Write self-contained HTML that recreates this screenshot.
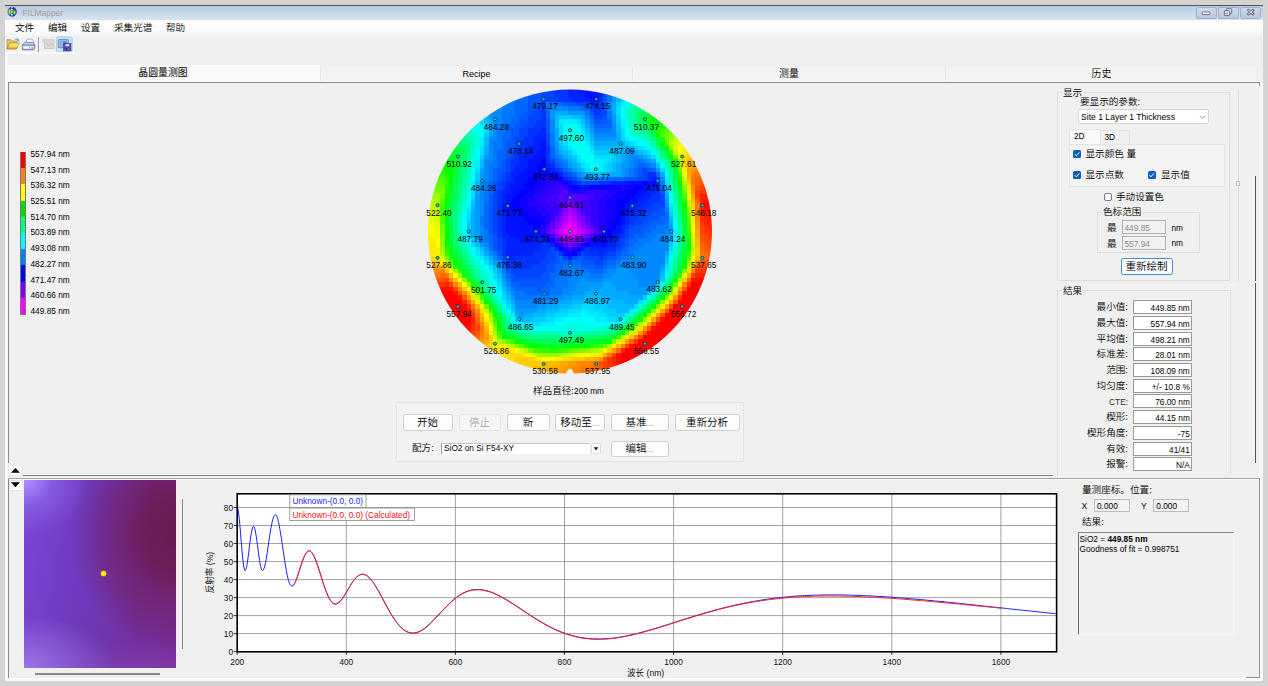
<!DOCTYPE html>
<html lang="zh"><head><meta charset="utf-8"><title>FILMapper</title>
<style>
*{box-sizing:border-box;margin:0;padding:0}
html,body{width:1268px;height:686px;overflow:hidden;background:#d3d3d3}
body{position:relative;font-family:"Liberation Sans","Noto Sans CJK SC",sans-serif;font-size:8.3px;color:#000;line-height:1}
.abs{position:absolute}
.win{left:5px;top:5px;width:1258px;height:676px;background:#f0f0f0;border-top:1px solid #555;}
.title{left:5px;top:6px;width:1258px;height:14px;background:linear-gradient(#b9cbe0,#c6d5e7 45%,#d8e3f0)}
.title span{position:absolute;left:17.5px;top:3.2px;font-size:8.4px;color:#a0a0a0}
.menu{left:5px;top:20px;width:1258px;height:16px;background:linear-gradient(#fcfcfc,#fafafa 70%,#f3f3f3)}
.menu span{position:absolute;top:2.5px;font-size:9.6px;white-space:nowrap;font-weight:350}
.wb{top:6.5px;height:12px;border:1px solid #9fb1c9;border-radius:2px;background:linear-gradient(#ccd9e9,#b7c8de)}
.tool{left:5px;top:36px;width:69px;height:18px;background:#f1f1f1}
.tab{top:67px;height:14px;font-size:9.9px;font-weight:350;text-align:center;padding-top:2.2px;border-right:1px solid #e6e6e6;background:#f3f3f3}
.tab.sel{font-weight:400;background:#fafafa;top:65.4px;height:15.6px;padding-top:3px}
.t{position:absolute;white-space:nowrap}
.cj{font-size:9.6px;font-weight:350}
.btn{position:absolute;background:#fdfdfd;border:1px solid #d0d0d0;border-radius:2.5px;text-align:center;font-size:10.5px;font-weight:350;white-space:nowrap}
.box{position:absolute;background:#fff;border:1px solid #999;text-align:right;padding:2.7px 1px 0 0;white-space:nowrap}
.gb{position:absolute;border:1px solid #dcdcdc}
.cb{position:absolute;width:8px;height:8px;border-radius:1.5px}
.cb.on{background:#0a5fc0}
.cb.off{background:#fdfdfd;border:1px solid #7a7a7a;border-radius:2px}
</style></head><body>
<div class="abs win"></div>
<div class="abs title"><span>FILMapper</span></div>
<!-- app icon -->
<svg class="abs" style="left:7px;top:6px" width="11" height="12" viewBox="0 0 11 12"><defs><radialGradient id="ig" cx=".25" cy=".5" r=".5"><stop offset="0" stop-color="#ff3010"/><stop offset=".45" stop-color="#ffe020"/><stop offset="1" stop-color="#20c830"/></radialGradient><clipPath id="ic"><ellipse cx="5.2" cy="5.8" rx="4.3" ry="4.7"/></clipPath></defs>
<g clip-path="url(#ic)"><rect x="0" y="0" width="11" height="12" fill="#1428d8"/><ellipse cx="2.6" cy="5.8" rx="2.1" ry="3" fill="url(#ig)"/><ellipse cx="7.3" cy="6.2" rx="1.5" ry="2.6" fill="#28c030"/><ellipse cx="7.6" cy="6.4" rx=".7" ry="1.3" fill="#d8e020"/><rect x="4.1" y="0" width="1.9" height="12" fill="#f4f4f4"/><path d="M5.2 2 v8" stroke="#111" stroke-width="1.1" stroke-dasharray="1 .7"/></g>
<ellipse cx="5.2" cy="5.8" rx="4.3" ry="4.7" fill="none" stroke="#2a3aa0" stroke-width=".5"/></svg>
<!-- window buttons -->
<div class="abs wb" style="left:1196px;width:20.5px"></div>
<div class="abs wb" style="left:1218px;width:20.5px"></div>
<div class="abs wb" style="left:1240px;width:21px"></div>
<svg class="abs" style="left:1196px;top:6px" width="66" height="13" viewBox="0 0 66 13"><rect x="6.3" y="6" width="7.6" height="2.6" rx=".6" fill="#f1f4f9" stroke="#59626f" stroke-width=".8"/><rect x="30.4" y="2.7" width="5.3" height="4.9" rx=".6" fill="#e9eef6" stroke="#59626f" stroke-width=".9"/><rect x="28.4" y="4.7" width="5.3" height="4.9" rx=".6" fill="#e9eef6" stroke="#59626f" stroke-width=".9"/><rect x="29.6" y="6.6" width="2.4" height="1.8" fill="#8e99aa"/><path d="M52.5 4.2 L57 8 M57 4.2 L52.5 8" stroke="#59626f" stroke-width="2.5" stroke-linecap="square"/><path d="M52.5 4.2 L57 8 M57 4.2 L52.5 8" stroke="#f1f4f9" stroke-width="1" stroke-linecap="square"/></svg>

<div class="abs menu"><span style="left:10px">文件</span><span style="left:43px">编辑</span><span style="left:76px">设置</span><span style="left:109px">采集光谱</span><span style="left:161px">帮助</span></div>
<div class="abs tool"></div>
<!-- toolbar icons -->
<svg class="abs" style="left:5px;top:36px" width="72" height="18" viewBox="0 0 72 18">
<defs><linearGradient id="fg" x1="0" y1="0" x2="0" y2="1"><stop offset="0" stop-color="#fff0a0"/><stop offset=".6" stop-color="#f8cf4a"/><stop offset="1" stop-color="#d89a20"/></linearGradient>
<linearGradient id="pg" x1="0" y1="0" x2="0" y2="1"><stop offset="0" stop-color="#eef3fa"/><stop offset="1" stop-color="#8fa3c8"/></linearGradient></defs>
<path d="M2 3.6 L2 12.6 L11.5 12.6 L11.5 5 L6.5 5 L5.5 3.6 Z" fill="#e6c25a" stroke="#a8862c" stroke-width=".6"/>
<path d="M1.9 13 L4.6 7 L14.4 7 L11.4 13 Z" fill="url(#fg)" stroke="#a07a1c" stroke-width=".6"/>
<path d="M9.6 3.4 q2 -1.6 3.6 .1 l.8 -.8 v2.5 h-2.5 l.9 -.9 q-1.1 -1 -2.8 -.9z" fill="#6a9ad8"/>
<path d="M20.8 6.8 L22 3.2 L27.4 3.2 L28.8 6.8 Z" fill="#f6f9fd" stroke="#7f93b8" stroke-width=".6"/>
<path d="M17.3 9.2 L19.4 6.4 L28.6 6.4 L29.8 9.2 Z" fill="#c3d0e6" stroke="#5a6f9a" stroke-width=".6"/>
<path d="M17.3 9.2 L29.8 9.2 L29.8 12.6 L28.4 13.8 L17.3 13.8 Z" fill="url(#pg)" stroke="#4c6190" stroke-width=".7"/>
<rect x="18.6" y="10.6" width="7.6" height="2" fill="#fbfcfe"/><rect x="24.3" y="11.2" width="1" height=".9" fill="#3fa04a"/>
<line x1="33.4" y1="1.2" x2="33.4" y2="16" stroke="#8c8c8c" stroke-width=".9"/>
<rect x="39.5" y="3.6" width="9.5" height="9" fill="#dbdbdb" stroke="#c6c6c6" stroke-width=".8"/><path d="M40.5 7 l3 2.6 l2.4 -2.2 l2.4 1.8" fill="none" stroke="#c0c0c0" stroke-width=".9"/><rect x="37.4" y="2.6" width="4.2" height="3.6" fill="#d2d2d2"/>
<rect x="51.4" y=".9" width="15.8" height="14.8" rx="1.6" fill="#cce4fa" stroke="#90c8f6" stroke-width=".9"/>
<rect x="53.4" y="3.6" width="10" height="8.2" rx=".6" fill="#a9b9d9" stroke="#6678a8" stroke-width=".8"/><rect x="55.2" y="5.2" width="6.6" height="5" fill="#4a86e0"/><rect x="55.2" y="5.2" width="3" height="5" fill="#8eb6ee"/>
<rect x="58.4" y="7.3" width="7.6" height="7.6" fill="#5649b6" stroke="#3c3290" stroke-width=".5"/><rect x="60.6" y="8.2" width="3.6" height="2" fill="#f0f0fb"/><rect x="60.9" y="12.4" width="3.2" height="2" fill="#2c2a58"/><rect x="62.6" y="12.8" width="1" height="1.2" fill="#d8d8ee"/>
</svg>
<div class="abs" style="left:5px;top:52.3px;width:69px;height:1.6px;background:#f9f9f9"></div>

<!-- tabs -->
<div class="abs tab sel" style="left:6px;width:315px">晶圆量测图</div>
<div class="abs tab" style="left:321px;width:312px;font-size:9px;padding-top:2.8px">Recipe</div>
<div class="abs tab" style="left:633px;width:313px">测量</div>
<div class="abs tab" style="left:946px;width:312px">历史</div>
<div class="abs" style="left:5px;top:54px;width:2.6px;height:627px;background:#f7f7f7"></div>
<!-- main panel border -->
<div class="abs" style="left:8px;top:81px;width:1253px;height:1px;background:#fbfbfb"></div>
<div class="abs" style="left:8px;top:82px;width:1252px;height:1.2px;background:#8c8c8c"></div>
<div class="abs" style="left:8px;top:82px;width:1.2px;height:596px;background:#8c8c8c"></div>
<div class="abs" style="left:1259px;top:82px;width:1.2px;height:4px;background:#8c8c8c"></div>
<div class="abs" style="left:8px;top:677px;width:16px;height:1.2px;background:#8c8c8c"></div>
<div class="abs" style="left:5px;top:678.4px;width:1258px;height:2.6px;background:#f8f8f8"></div>
<div class="abs" style="left:1260.4px;top:86px;width:2.6px;height:595px;background:#f6f6f6"></div>
<div class="abs" style="left:9px;top:678.2px;width:1252px;height:1px;background:#fdfdfd"></div>
<div class="abs" style="left:1260.2px;top:479px;width:1px;height:200px;background:#fdfdfd"></div>

<!-- colour legend -->
<div class="abs" id="legend" style="left:20px;top:152px;width:6px;height:163px;border:1px solid #777;border-top:none;background:linear-gradient(#ff0000 0 10%,#ff8020 10% 20%,#ffff00 20% 30%,#00e000 30% 40%,#00ff80 40% 50%,#00ffff 50% 60%,#0080ff 60% 70%,#0000ff 70% 80%,#8000ff 80% 90%,#ff00ff 90% 100%)"></div>
<div class="t" style="left:30.5px;top:149.8px">557.94 nm</div>
<div class="t" style="left:30.5px;top:165.5px">547.13 nm</div>
<div class="t" style="left:30.5px;top:181.2px">536.32 nm</div>
<div class="t" style="left:30.5px;top:197.0px">525.51 nm</div>
<div class="t" style="left:30.5px;top:212.7px">514.70 nm</div>
<div class="t" style="left:30.5px;top:228.4px">503.89 nm</div>
<div class="t" style="left:30.5px;top:244.1px">493.08 nm</div>
<div class="t" style="left:30.5px;top:259.8px">482.27 nm</div>
<div class="t" style="left:30.5px;top:275.6px">471.47 nm</div>
<div class="t" style="left:30.5px;top:291.3px">460.66 nm</div>
<div class="t" style="left:30.5px;top:307.0px">449.85 nm</div>


<svg class="abs" style="left:0;top:0" width="1268" height="686" viewBox="0 0 1268 686">
<defs><clipPath id="wc"><path d="M566.0 373.4 A142.0 142.0 0 1 1 574.0 373.4 L571.9 369.3 L568.1 369.3 Z"/></clipPath><clipPath id="tc"><rect x="400" y="84" width="340" height="291.5"/></clipPath></defs>
<g clip-path="url(#wc)">
<g transform="translate(427.00 88.50) scale(4.40)" shape-rendering="crispEdges">
<path fill="#05f" d="M23 0h3v1h-3zM23 1h3v1h-3zM23 2h3v1h-3zM40 2h1v1h-1zM23 3h3v1h-3zM31 3h3v1h-3zM40 3h1v1h-1zM23 4h2v1h-2zM40 4h1v1h-1zM22 5h2v1h-2zM37 5h1v1h-1zM21 6h2v1h-2zM40 6h1v1h-1zM21 7h2v1h-2zM27 7h1v1h-1zM38 7h3v1h-3zM20 8h2v1h-2zM27 8h1v1h-1zM19 9h2v1h-2zM27 9h1v1h-1zM19 10h2v1h-2zM19 11h1v1h-1zM18 12h2v1h-2zM18 13h2v1h-2zM18 14h1v1h-1zM18 15h1v1h-1zM17 16h1v1h-1zM17 17h1v1h-1zM29 17h1v1h-1zM16 18h2v1h-2zM48 18h1v1h-1zM50 18h1v1h-1zM16 19h1v1h-1zM32 19h1v1h-1zM48 19h1v1h-1zM16 20h1v1h-1zM45 20h3v1h-3zM15 21h1v1h-1zM35 21h1v1h-1zM15 22h1v1h-1zM53 23h1v1h-1zM14 24h1v1h-1zM14 25h1v1h-1zM14 26h1v1h-1zM14 27h1v1h-1zM53 27h1v1h-1zM14 28h1v1h-1zM51 28h3v1h-3zM14 29h1v1h-1zM50 29h3v1h-3zM14 30h1v1h-1zM49 30h2v1h-2zM14 31h1v1h-1zM47 31h3v1h-3zM14 32h1v1h-1zM46 32h3v1h-3zM15 33h1v1h-1zM46 33h1v1h-1zM15 34h1v1h-1zM45 34h1v1h-1zM15 35h1v1h-1zM45 35h1v1h-1zM15 36h1v1h-1zM44 36h1v1h-1zM16 37h1v1h-1zM29 37h1v1h-1zM43 37h1v1h-1zM29 38h1v1h-1zM34 38h2v1h-2zM41 38h2v1h-2zM17 39h1v1h-1zM28 39h2v1h-2zM32 39h1v1h-1zM35 39h3v1h-3zM40 39h1v1h-1zM27 40h2v1h-2zM38 40h2v1h-2zM18 41h1v1h-1zM27 41h2v1h-2zM19 42h1v1h-1zM26 42h2v1h-2zM19 43h9v1h-9zM21 44h6v1h-6zM25 45h1v1h-1z"/>
<path fill="#04f" d="M26 0h3v1h-3zM40 0h1v1h-1zM26 1h3v1h-3zM40 1h1v1h-1zM26 2h4v1h-4zM26 3h1v1h-1zM34 3h3v1h-3zM25 4h2v1h-2zM37 4h1v1h-1zM24 5h2v1h-2zM39 5h2v1h-2zM23 6h3v1h-3zM38 6h2v1h-2zM23 7h2v1h-2zM22 8h2v1h-2zM21 9h2v1h-2zM21 10h2v1h-2zM27 10h1v1h-1zM20 11h2v1h-2zM27 11h1v1h-1zM20 12h1v1h-1zM27 12h1v1h-1zM20 13h1v1h-1zM19 14h1v1h-1zM19 15h1v1h-1zM18 16h1v1h-1zM28 16h1v1h-1zM18 17h1v1h-1zM18 18h1v1h-1zM30 18h1v1h-1zM49 18h1v1h-1zM17 19h1v1h-1zM31 19h1v1h-1zM49 19h1v1h-1zM17 20h1v1h-1zM33 20h1v1h-1zM48 20h2v1h-2zM16 21h1v1h-1zM36 21h3v1h-3zM16 22h1v1h-1zM15 23h1v1h-1zM15 24h1v1h-1zM53 24h1v1h-1zM15 25h1v1h-1zM53 25h1v1h-1zM15 26h1v1h-1zM51 26h3v1h-3zM15 27h1v1h-1zM50 27h3v1h-3zM15 28h1v1h-1zM49 28h2v1h-2zM15 29h1v1h-1zM48 29h2v1h-2zM15 30h1v1h-1zM47 30h2v1h-2zM15 31h1v1h-1zM46 31h1v1h-1zM15 32h1v1h-1zM45 32h1v1h-1zM45 33h1v1h-1zM16 34h1v1h-1zM44 34h1v1h-1zM16 35h1v1h-1zM44 35h1v1h-1zM16 36h1v1h-1zM28 36h1v1h-1zM43 36h1v1h-1zM27 37h2v1h-2zM35 37h1v1h-1zM41 37h2v1h-2zM17 38h1v1h-1zM27 38h2v1h-2zM31 38h1v1h-1zM33 38h1v1h-1zM36 38h3v1h-3zM40 38h1v1h-1zM26 39h2v1h-2zM38 39h2v1h-2zM18 40h1v1h-1zM24 40h3v1h-3zM19 41h8v1h-8zM20 42h6v1h-6z"/>
<path fill="#03f" d="M29 0h3v1h-3zM29 1h3v1h-3zM30 2h3v1h-3zM39 2h1v1h-1zM37 3h1v1h-1zM39 3h1v1h-1zM38 4h2v1h-2zM26 5h1v1h-1zM38 5h1v1h-1zM26 6h1v1h-1zM25 7h2v1h-2zM24 8h3v1h-3zM23 9h3v1h-3zM23 10h2v1h-2zM22 11h2v1h-2zM21 12h3v1h-3zM21 13h2v1h-2zM27 13h1v1h-1zM20 14h2v1h-2zM27 14h1v1h-1zM20 15h1v1h-1zM27 15h1v1h-1zM19 16h2v1h-2zM27 16h1v1h-1zM19 17h1v1h-1zM28 17h1v1h-1zM19 18h1v1h-1zM29 18h1v1h-1zM18 19h1v1h-1zM50 19h2v1h-2zM18 20h1v1h-1zM32 20h1v1h-1zM50 20h1v1h-1zM52 20h1v1h-1zM17 21h1v1h-1zM34 21h1v1h-1zM39 21h3v1h-3zM17 22h1v1h-1zM16 23h1v1h-1zM52 23h1v1h-1zM16 24h1v1h-1zM51 24h2v1h-2zM16 25h1v1h-1zM50 25h3v1h-3zM16 26h1v1h-1zM49 26h2v1h-2zM16 27h1v1h-1zM48 27h2v1h-2zM16 28h1v1h-1zM47 28h2v1h-2zM16 29h1v1h-1zM46 29h2v1h-2zM16 30h1v1h-1zM46 30h1v1h-1zM16 31h1v1h-1zM45 31h1v1h-1zM16 32h1v1h-1zM16 33h1v1h-1zM44 33h1v1h-1zM17 34h1v1h-1zM43 34h1v1h-1zM17 35h1v1h-1zM26 35h2v1h-2zM43 35h1v1h-1zM17 36h1v1h-1zM26 36h2v1h-2zM36 36h1v1h-1zM41 36h2v1h-2zM17 37h1v1h-1zM24 37h3v1h-3zM30 37h1v1h-1zM36 37h3v1h-3zM40 37h1v1h-1zM20 38h7v1h-7zM39 38h1v1h-1zM18 39h8v1h-8zM19 40h5v1h-5z"/>
<path fill="#02f" d="M32 0h4v1h-4zM39 0h1v1h-1zM32 1h4v1h-4zM39 1h1v1h-1zM33 2h4v1h-4zM38 3h1v1h-1zM26 9h1v1h-1zM25 10h2v1h-2zM24 11h3v1h-3zM24 12h2v1h-2zM23 13h3v1h-3zM22 14h3v1h-3zM21 15h3v1h-3zM21 16h2v1h-2zM20 17h3v1h-3zM27 17h1v1h-1zM20 18h2v1h-2zM28 18h1v1h-1zM19 19h2v1h-2zM30 19h1v1h-1zM19 20h1v1h-1zM31 20h1v1h-1zM51 20h1v1h-1zM18 21h2v1h-2zM33 21h1v1h-1zM42 21h4v1h-4zM52 21h1v1h-1zM18 22h1v1h-1zM51 22h2v1h-2zM17 23h2v1h-2zM50 23h2v1h-2zM17 24h1v1h-1zM49 24h2v1h-2zM17 25h1v1h-1zM48 25h2v1h-2zM47 26h2v1h-2zM46 27h2v1h-2zM17 28h1v1h-1zM46 28h1v1h-1zM17 29h1v1h-1zM45 29h1v1h-1zM17 30h1v1h-1zM45 30h1v1h-1zM17 31h1v1h-1zM44 31h1v1h-1zM17 32h1v1h-1zM44 32h1v1h-1zM17 33h2v1h-2zM43 33h1v1h-1zM18 34h3v1h-3zM24 34h3v1h-3zM42 34h1v1h-1zM18 35h8v1h-8zM28 35h1v1h-1zM41 35h2v1h-2zM18 36h8v1h-8zM29 36h1v1h-1zM37 36h4v1h-4zM18 37h6v1h-6zM34 37h1v1h-1zM39 37h1v1h-1zM18 38h2v1h-2zM32 38h1v1h-1z"/>
<path fill="#01f" d="M36 0h3v1h-3zM36 1h3v1h-3zM37 2h2v1h-2zM26 12h1v1h-1zM26 13h1v1h-1zM25 14h2v1h-2zM24 15h3v1h-3zM23 16h3v1h-3zM23 17h2v1h-2zM22 18h3v1h-3zM27 18h1v1h-1zM21 19h3v1h-3zM29 19h1v1h-1zM20 20h3v1h-3zM20 21h2v1h-2zM32 21h1v1h-1zM46 21h3v1h-3zM50 21h2v1h-2zM19 22h3v1h-3zM34 22h3v1h-3zM49 22h2v1h-2zM19 23h2v1h-2zM48 23h2v1h-2zM18 24h2v1h-2zM47 24h2v1h-2zM18 25h1v1h-1zM46 25h2v1h-2zM17 26h1v1h-1zM45 26h2v1h-2zM17 27h2v1h-2zM45 27h1v1h-1zM18 28h3v1h-3zM45 28h1v1h-1zM18 29h4v1h-4zM44 29h1v1h-1zM18 30h5v1h-5zM44 30h1v1h-1zM18 31h6v1h-6zM43 31h1v1h-1zM18 32h7v1h-7zM42 32h2v1h-2zM19 33h7v1h-7zM42 33h1v1h-1zM21 34h3v1h-3zM27 34h1v1h-1zM41 34h1v1h-1zM37 35h4v1h-4zM35 36h1v1h-1zM31 37h1v1h-1z"/>
<path fill="#06f" d="M41 0h1v1h-1zM20 1h3v1h-3zM41 1h1v1h-1zM20 2h3v1h-3zM20 3h3v1h-3zM28 3h3v1h-3zM20 4h3v1h-3zM27 4h1v1h-1zM35 4h2v1h-2zM20 5h2v1h-2zM27 5h1v1h-1zM19 6h2v1h-2zM27 6h1v1h-1zM37 6h1v1h-1zM19 7h2v1h-2zM41 7h1v1h-1zM18 8h2v1h-2zM38 8h4v1h-4zM18 9h1v1h-1zM17 10h2v1h-2zM17 11h2v1h-2zM17 12h1v1h-1zM17 13h1v1h-1zM28 13h1v1h-1zM16 14h2v1h-2zM28 14h1v1h-1zM16 15h2v1h-2zM28 15h1v1h-1zM16 16h1v1h-1zM29 16h1v1h-1zM16 17h1v1h-1zM30 17h1v1h-1zM48 17h2v1h-2zM15 18h1v1h-1zM31 18h1v1h-1zM47 18h1v1h-1zM51 18h1v1h-1zM15 19h1v1h-1zM33 19h1v1h-1zM47 19h1v1h-1zM52 19h1v1h-1zM15 20h1v1h-1zM34 20h1v1h-1zM41 20h4v1h-4zM14 21h1v1h-1zM14 22h1v1h-1zM53 22h1v1h-1zM14 23h1v1h-1zM13 26h1v1h-1zM13 27h1v1h-1zM13 28h1v1h-1zM54 28h1v1h-1zM13 29h1v1h-1zM53 29h2v1h-2zM13 30h1v1h-1zM51 30h3v1h-3zM13 31h1v1h-1zM50 31h2v1h-2zM49 32h2v1h-2zM14 33h1v1h-1zM47 33h3v1h-3zM14 34h1v1h-1zM46 34h2v1h-2zM14 35h1v1h-1zM46 35h1v1h-1zM45 36h1v1h-1zM44 37h2v1h-2zM16 38h1v1h-1zM30 38h1v1h-1zM43 38h1v1h-1zM30 39h2v1h-2zM33 39h2v1h-2zM41 39h2v1h-2zM17 40h1v1h-1zM29 40h2v1h-2zM35 40h3v1h-3zM40 40h1v1h-1zM29 41h2v1h-2zM37 41h3v1h-3zM18 42h1v1h-1zM28 42h2v1h-2zM28 43h1v1h-1zM19 44h2v1h-2zM27 44h2v1h-2zM20 45h5v1h-5zM26 45h2v1h-2zM22 46h6v1h-6z"/>
<path fill="#09f" d="M42 1h1v1h-1zM42 2h1v1h-1zM28 5h1v1h-1zM32 5h4v1h-4zM14 6h1v1h-1zM28 6h1v1h-1zM42 6h1v1h-1zM36 7h1v1h-1zM42 7h1v1h-1zM37 9h1v1h-1zM14 10h1v1h-1zM38 11h5v1h-5zM29 12h1v1h-1zM29 13h1v1h-1zM45 14h2v1h-2zM13 15h1v1h-1zM45 15h1v1h-1zM48 15h1v1h-1zM45 16h1v1h-1zM50 16h1v1h-1zM32 17h1v1h-1zM44 17h2v1h-2zM33 18h1v1h-1zM44 18h1v1h-1zM52 18h1v1h-1zM12 19h1v1h-1zM35 19h1v1h-1zM44 19h1v1h-1zM12 20h1v1h-1zM11 24h1v1h-1zM11 25h1v1h-1zM54 25h1v1h-1zM11 26h1v1h-1zM11 27h1v1h-1zM11 28h1v1h-1zM11 29h1v1h-1zM11 30h1v1h-1zM11 31h1v1h-1zM55 31h1v1h-1zM11 32h1v1h-1zM11 33h1v1h-1zM55 33h1v1h-1zM12 35h1v1h-1zM13 36h1v1h-1zM15 39h1v1h-1zM16 40h1v1h-1zM44 40h1v1h-1zM53 40h1v1h-1zM43 41h3v1h-3zM42 42h5v1h-5zM17 43h1v1h-1zM35 43h1v1h-1zM40 43h8v1h-8zM34 44h6v1h-6zM42 44h6v1h-6zM18 45h1v1h-1zM34 45h3v1h-3zM38 45h1v1h-1zM43 45h8v1h-8zM33 46h3v1h-3zM46 46h4v1h-4zM19 47h1v1h-1zM31 47h2v1h-2zM28 48h2v1h-2zM25 49h2v1h-2zM20 50h5v1h-5zM21 51h1v1h-1z"/>
<path fill="#0bf" d="M43 1h1v1h-1zM43 2h1v1h-1zM13 6h1v1h-1zM29 6h1v1h-1zM33 6h2v1h-2zM13 7h1v1h-1zM29 7h1v1h-1zM35 7h1v1h-1zM29 8h1v1h-1zM43 8h1v1h-1zM36 9h1v1h-1zM43 9h1v1h-1zM13 11h1v1h-1zM37 11h1v1h-1zM13 12h1v1h-1zM44 12h1v1h-1zM30 13h1v1h-1zM38 13h6v1h-6zM46 13h1v1h-1zM31 14h1v1h-1zM43 14h1v1h-1zM48 14h1v1h-1zM32 15h1v1h-1zM43 15h1v1h-1zM50 15h1v1h-1zM12 16h1v1h-1zM33 16h1v1h-1zM43 16h1v1h-1zM12 17h1v1h-1zM34 17h1v1h-1zM42 17h1v1h-1zM52 17h1v1h-1zM35 18h1v1h-1zM42 18h1v1h-1zM37 19h4v1h-4zM11 21h1v1h-1zM11 22h1v1h-1zM54 23h1v1h-1zM10 26h1v1h-1zM10 27h1v1h-1zM55 29h1v1h-1zM9 32h1v1h-1zM55 34h1v1h-1zM11 35h1v1h-1zM12 36h1v1h-1zM54 38h1v1h-1zM14 39h1v1h-1zM15 40h1v1h-1zM16 42h1v1h-1zM53 42h1v1h-1zM52 44h1v1h-1zM17 45h1v1h-1zM51 45h1v1h-1zM50 46h1v1h-1zM18 47h1v1h-1zM36 47h4v1h-4zM33 48h3v1h-3zM39 48h6v1h-6zM19 49h1v1h-1zM30 49h3v1h-3zM41 49h6v1h-6zM27 50h3v1h-3zM43 50h3v1h-3zM24 51h3v1h-3zM22 52h2v1h-2z"/>
<path fill="#0df" d="M44 1h1v1h-1zM44 2h1v1h-1zM43 4h1v1h-1zM43 5h1v1h-1zM12 7h1v1h-1zM34 7h1v1h-1zM30 8h1v1h-1zM13 9h1v1h-1zM30 9h1v1h-1zM35 9h1v1h-1zM44 9h1v1h-1zM30 10h1v1h-1zM44 10h1v1h-1zM36 11h1v1h-1zM31 12h1v1h-1zM46 12h1v1h-1zM12 13h1v1h-1zM37 13h1v1h-1zM48 13h1v1h-1zM12 14h1v1h-1zM50 14h1v1h-1zM38 15h4v1h-4zM51 15h1v1h-1zM34 16h1v1h-1zM41 16h1v1h-1zM35 17h1v1h-1zM40 17h1v1h-1zM11 18h1v1h-1zM36 18h1v1h-1zM40 18h1v1h-1zM53 18h1v1h-1zM54 21h1v1h-1zM10 23h1v1h-1zM10 24h1v1h-1zM55 27h1v1h-1zM9 28h1v1h-1zM9 29h1v1h-1zM9 33h1v1h-1zM10 35h1v1h-1zM11 36h1v1h-1zM55 36h1v1h-1zM13 39h1v1h-1zM14 40h1v1h-1zM54 40h1v1h-1zM15 42h1v1h-1zM16 44h1v1h-1zM17 47h1v1h-1zM48 48h1v1h-1zM18 49h1v1h-1zM35 49h3v1h-3zM47 49h1v1h-1zM32 50h3v1h-3zM37 50h3v1h-3zM29 51h3v1h-3zM39 51h2v1h-2zM27 52h2v1h-2zM41 52h2v1h-2zM22 53h4v1h-4z"/>
<path fill="#07f" d="M18 2h2v1h-2zM41 2h1v1h-1zM16 3h4v1h-4zM27 3h1v1h-1zM17 4h3v1h-3zM32 4h3v1h-3zM17 5h3v1h-3zM36 5h1v1h-1zM41 5h1v1h-1zM17 6h2v1h-2zM41 6h1v1h-1zM17 7h2v1h-2zM37 7h1v1h-1zM16 8h2v1h-2zM16 9h2v1h-2zM38 9h4v1h-4zM16 10h1v1h-1zM28 10h1v1h-1zM16 11h1v1h-1zM28 11h1v1h-1zM15 12h2v1h-2zM28 12h1v1h-1zM15 13h2v1h-2zM15 14h1v1h-1zM15 15h1v1h-1zM29 15h1v1h-1zM15 16h1v1h-1zM30 16h1v1h-1zM47 16h2v1h-2zM14 17h2v1h-2zM31 17h1v1h-1zM47 17h1v1h-1zM50 17h1v1h-1zM14 18h1v1h-1zM32 18h1v1h-1zM46 18h1v1h-1zM14 19h1v1h-1zM46 19h1v1h-1zM14 20h1v1h-1zM35 20h1v1h-1zM38 20h3v1h-3zM13 21h1v1h-1zM53 21h1v1h-1zM13 22h1v1h-1zM13 23h1v1h-1zM13 24h1v1h-1zM13 25h1v1h-1zM54 27h1v1h-1zM12 29h1v1h-1zM12 30h1v1h-1zM54 30h1v1h-1zM52 31h3v1h-3zM13 32h1v1h-1zM51 32h3v1h-3zM13 33h1v1h-1zM50 33h2v1h-2zM13 34h1v1h-1zM48 34h3v1h-3zM47 35h2v1h-2zM14 36h1v1h-1zM46 36h2v1h-2zM15 37h1v1h-1zM46 37h1v1h-1zM44 38h2v1h-2zM43 39h1v1h-1zM31 40h4v1h-4zM41 40h2v1h-2zM17 41h1v1h-1zM31 41h2v1h-2zM34 41h3v1h-3zM40 41h1v1h-1zM30 42h3v1h-3zM37 42h3v1h-3zM18 43h1v1h-1zM29 43h3v1h-3zM29 44h3v1h-3zM19 45h1v1h-1zM28 45h3v1h-3zM20 46h2v1h-2zM28 46h3v1h-3zM20 47h8v1h-8zM24 48h1v1h-1z"/>
<path fill="#0ff" d="M45 2h1v1h-1zM44 4h1v1h-1zM44 5h1v1h-1zM44 6h1v1h-1zM11 8h1v1h-1zM12 9h1v1h-1zM34 9h1v1h-1zM12 10h1v1h-1zM31 10h1v1h-1zM45 10h1v1h-1zM31 11h1v1h-1zM35 11h1v1h-1zM46 11h1v1h-1zM32 12h1v1h-1zM35 12h1v1h-1zM48 12h1v1h-1zM33 13h1v1h-1zM36 13h1v1h-1zM50 13h1v1h-1zM11 14h1v1h-1zM34 14h1v1h-1zM36 14h1v1h-1zM51 14h1v1h-1zM11 15h1v1h-1zM35 15h1v1h-1zM37 15h1v1h-1zM36 16h2v1h-2zM37 17h2v1h-2zM38 18h1v1h-1zM10 19h1v1h-1zM54 19h1v1h-1zM10 20h1v1h-1zM9 25h1v1h-1zM55 25h1v1h-1zM9 26h1v1h-1zM8 30h1v1h-1zM8 31h1v1h-1zM56 31h1v1h-1zM8 32h1v1h-1zM8 33h1v1h-1zM56 34h1v1h-1zM10 36h1v1h-1zM55 38h1v1h-1zM12 39h1v1h-1zM13 40h1v1h-1zM14 42h1v1h-1zM15 44h1v1h-1zM52 45h1v1h-1zM16 46h1v1h-1zM18 50h1v1h-1zM35 51h1v1h-1zM31 52h3v1h-3zM35 52h3v1h-3zM44 52h1v1h-1zM20 53h1v1h-1zM29 53h2v1h-2zM37 53h5v1h-5z"/>
<path fill="#0fd" d="M46 2h1v1h-1zM45 4h1v1h-1zM45 6h1v1h-1zM45 7h1v1h-1zM9 8h1v1h-1zM10 9h1v1h-1zM11 10h1v1h-1zM32 10h2v1h-2zM46 10h1v1h-1zM11 11h1v1h-1zM33 11h1v1h-1zM48 11h1v1h-1zM11 12h1v1h-1zM34 12h1v1h-1zM50 12h1v1h-1zM52 15h1v1h-1zM10 16h1v1h-1zM10 17h1v1h-1zM54 18h1v1h-1zM9 21h1v1h-1zM9 22h1v1h-1zM55 23h1v1h-1zM8 27h1v1h-1zM56 29h1v1h-1zM8 34h1v1h-1zM9 36h1v1h-1zM11 39h1v1h-1zM55 39h1v1h-1zM12 40h1v1h-1zM13 42h1v1h-1zM14 44h1v1h-1zM15 46h1v1h-1zM49 48h1v1h-1zM48 49h1v1h-1zM19 53h1v1h-1zM22 54h1v1h-1zM31 54h4v1h-4zM37 54h2v1h-2z"/>
<path fill="#08f" d="M41 3h1v1h-1zM15 4h2v1h-2zM28 4h4v1h-4zM41 4h1v1h-1zM14 5h3v1h-3zM15 6h2v1h-2zM36 6h1v1h-1zM15 7h2v1h-2zM28 7h1v1h-1zM15 8h1v1h-1zM28 8h1v1h-1zM37 8h1v1h-1zM42 8h1v1h-1zM15 9h1v1h-1zM28 9h1v1h-1zM42 9h1v1h-1zM15 10h1v1h-1zM38 10h5v1h-5zM14 11h2v1h-2zM14 12h1v1h-1zM14 13h1v1h-1zM14 14h1v1h-1zM29 14h1v1h-1zM14 15h1v1h-1zM30 15h1v1h-1zM46 15h2v1h-2zM13 16h2v1h-2zM31 16h1v1h-1zM46 16h1v1h-1zM49 16h1v1h-1zM13 17h1v1h-1zM46 17h1v1h-1zM51 17h1v1h-1zM13 18h1v1h-1zM45 18h1v1h-1zM13 19h1v1h-1zM34 19h1v1h-1zM45 19h1v1h-1zM13 20h1v1h-1zM36 20h2v1h-2zM53 20h1v1h-1zM12 21h1v1h-1zM12 22h1v1h-1zM12 23h1v1h-1zM12 24h1v1h-1zM12 25h1v1h-1zM12 26h1v1h-1zM54 26h1v1h-1zM12 27h1v1h-1zM12 28h1v1h-1zM12 31h1v1h-1zM12 32h1v1h-1zM54 32h2v1h-2zM12 33h1v1h-1zM52 33h3v1h-3zM12 34h1v1h-1zM51 34h4v1h-4zM13 35h1v1h-1zM49 35h6v1h-6zM48 36h7v1h-7zM14 37h1v1h-1zM47 37h7v1h-7zM15 38h1v1h-1zM46 38h8v1h-8zM16 39h1v1h-1zM44 39h10v1h-10zM43 40h1v1h-1zM45 40h8v1h-8zM33 41h1v1h-1zM41 41h2v1h-2zM46 41h7v1h-7zM17 42h1v1h-1zM33 42h4v1h-4zM40 42h2v1h-2zM47 42h6v1h-6zM32 43h3v1h-3zM36 43h4v1h-4zM48 43h5v1h-5zM18 44h1v1h-1zM32 44h2v1h-2zM48 44h4v1h-4zM31 45h3v1h-3zM19 46h1v1h-1zM31 46h2v1h-2zM28 47h3v1h-3zM20 48h4v1h-4zM25 48h3v1h-3zM20 49h5v1h-5z"/>
<path fill="#0af" d="M42 3h1v1h-1zM42 4h1v1h-1zM13 5h1v1h-1zM29 5h3v1h-3zM42 5h1v1h-1zM35 6h1v1h-1zM14 7h1v1h-1zM14 8h1v1h-1zM36 8h1v1h-1zM14 9h1v1h-1zM29 9h1v1h-1zM29 10h1v1h-1zM37 10h1v1h-1zM43 10h1v1h-1zM29 11h1v1h-1zM43 11h1v1h-1zM38 12h6v1h-6zM13 13h1v1h-1zM44 13h2v1h-2zM13 14h1v1h-1zM30 14h1v1h-1zM44 14h1v1h-1zM47 14h1v1h-1zM31 15h1v1h-1zM44 15h1v1h-1zM49 15h1v1h-1zM32 16h1v1h-1zM44 16h1v1h-1zM51 16h1v1h-1zM33 17h1v1h-1zM43 17h1v1h-1zM12 18h1v1h-1zM34 18h1v1h-1zM43 18h1v1h-1zM36 19h1v1h-1zM41 19h3v1h-3zM53 19h1v1h-1zM11 23h1v1h-1zM54 24h1v1h-1zM10 28h1v1h-1zM10 29h1v1h-1zM10 30h1v1h-1zM55 30h1v1h-1zM10 31h1v1h-1zM10 32h1v1h-1zM10 33h1v1h-1zM11 34h1v1h-1zM13 37h1v1h-1zM54 37h1v1h-1zM14 38h1v1h-1zM16 41h1v1h-1zM53 41h1v1h-1zM17 44h1v1h-1zM40 44h2v1h-2zM37 45h1v1h-1zM39 45h4v1h-4zM18 46h1v1h-1zM36 46h10v1h-10zM33 47h3v1h-3zM40 47h9v1h-9zM19 48h1v1h-1zM30 48h3v1h-3zM45 48h3v1h-3zM27 49h3v1h-3zM25 50h2v1h-2zM20 51h1v1h-1zM22 51h2v1h-2zM21 52h1v1h-1z"/>
<path fill="#0cf" d="M43 3h1v1h-1zM12 6h1v1h-1zM30 6h3v1h-3zM43 6h1v1h-1zM43 7h1v1h-1zM13 8h1v1h-1zM35 8h1v1h-1zM13 10h1v1h-1zM36 10h1v1h-1zM30 11h1v1h-1zM44 11h1v1h-1zM30 12h1v1h-1zM37 12h1v1h-1zM45 12h1v1h-1zM31 13h1v1h-1zM47 13h1v1h-1zM32 14h1v1h-1zM38 14h5v1h-5zM49 14h1v1h-1zM12 15h1v1h-1zM33 15h1v1h-1zM42 15h1v1h-1zM42 16h1v1h-1zM41 17h1v1h-1zM41 18h1v1h-1zM11 19h1v1h-1zM11 20h1v1h-1zM54 22h1v1h-1zM10 25h1v1h-1zM55 28h1v1h-1zM9 30h1v1h-1zM9 31h1v1h-1zM10 34h1v1h-1zM55 35h1v1h-1zM12 37h1v1h-1zM13 38h1v1h-1zM54 39h1v1h-1zM15 41h1v1h-1zM16 43h1v1h-1zM53 43h1v1h-1zM17 46h1v1h-1zM49 47h1v1h-1zM18 48h1v1h-1zM36 48h3v1h-3zM33 49h2v1h-2zM38 49h3v1h-3zM19 50h1v1h-1zM30 50h2v1h-2zM40 50h3v1h-3zM27 51h2v1h-2zM41 51h4v1h-4zM20 52h1v1h-1zM24 52h3v1h-3zM43 52h1v1h-1z"/>
<path fill="#0ef" d="M44 3h1v1h-1zM11 7h1v1h-1zM30 7h4v1h-4zM44 7h1v1h-1zM12 8h1v1h-1zM34 8h1v1h-1zM44 8h1v1h-1zM35 10h1v1h-1zM12 11h1v1h-1zM45 11h1v1h-1zM12 12h1v1h-1zM36 12h1v1h-1zM47 12h1v1h-1zM32 13h1v1h-1zM49 13h1v1h-1zM33 14h1v1h-1zM37 14h1v1h-1zM34 15h1v1h-1zM11 16h1v1h-1zM35 16h1v1h-1zM38 16h3v1h-3zM52 16h1v1h-1zM11 17h1v1h-1zM36 17h1v1h-1zM39 17h1v1h-1zM37 18h1v1h-1zM39 18h1v1h-1zM54 20h1v1h-1zM10 21h1v1h-1zM10 22h1v1h-1zM55 26h1v1h-1zM9 27h1v1h-1zM56 32h1v1h-1zM56 33h1v1h-1zM9 34h1v1h-1zM11 37h1v1h-1zM55 37h1v1h-1zM12 38h1v1h-1zM14 41h1v1h-1zM54 41h1v1h-1zM15 43h1v1h-1zM16 45h1v1h-1zM17 48h1v1h-1zM35 50h2v1h-2zM46 50h1v1h-1zM19 51h1v1h-1zM32 51h3v1h-3zM36 51h3v1h-3zM45 51h1v1h-1zM29 52h2v1h-2zM38 52h3v1h-3zM21 53h1v1h-1zM26 53h3v1h-3z"/>
<path fill="#0fe" d="M45 3h1v1h-1zM10 8h1v1h-1zM31 8h3v1h-3zM45 8h1v1h-1zM11 9h1v1h-1zM31 9h1v1h-1zM33 9h1v1h-1zM45 9h1v1h-1zM34 10h1v1h-1zM32 11h1v1h-1zM34 11h1v1h-1zM47 11h1v1h-1zM33 12h1v1h-1zM49 12h1v1h-1zM11 13h1v1h-1zM34 13h2v1h-2zM35 14h1v1h-1zM36 15h1v1h-1zM53 17h1v1h-1zM10 18h1v1h-1zM9 23h1v1h-1zM9 24h1v1h-1zM55 24h1v1h-1zM8 28h1v1h-1zM8 29h1v1h-1zM56 30h1v1h-1zM9 35h1v1h-1zM56 35h1v1h-1zM10 37h1v1h-1zM11 38h1v1h-1zM13 41h1v1h-1zM54 42h1v1h-1zM14 43h1v1h-1zM53 44h1v1h-1zM15 45h1v1h-1zM51 46h1v1h-1zM16 47h1v1h-1zM50 47h1v1h-1zM17 49h1v1h-1zM19 52h1v1h-1zM34 52h1v1h-1zM31 53h6v1h-6zM42 53h2v1h-2zM23 54h8v1h-8zM35 54h2v1h-2z"/>
<path fill="#0fc" d="M46 3h1v1h-1zM45 5h1v1h-1zM9 9h1v1h-1zM32 9h1v1h-1zM46 9h1v1h-1zM10 10h1v1h-1zM47 10h1v1h-1zM49 11h1v1h-1zM51 13h1v1h-1zM10 14h1v1h-1zM10 15h1v1h-1zM53 16h1v1h-1zM9 19h1v1h-1zM9 20h1v1h-1zM55 22h1v1h-1zM8 25h1v1h-1zM8 26h1v1h-1zM56 27h1v1h-1zM56 28h1v1h-1zM7 30h1v1h-1zM7 31h1v1h-1zM56 36h1v1h-1zM10 38h1v1h-1zM11 40h1v1h-1zM55 40h1v1h-1zM12 41h1v1h-1zM54 43h1v1h-1zM14 45h1v1h-1zM16 48h1v1h-1zM47 50h1v1h-1zM18 51h1v1h-1zM46 51h1v1h-1zM21 54h1v1h-1zM39 54h2v1h-2zM30 55h4v1h-4z"/>
<path fill="#0fa" d="M47 3h1v1h-1zM46 5h1v1h-1zM46 6h1v1h-1zM47 9h1v1h-1zM8 10h1v1h-1zM49 10h1v1h-1zM9 11h1v1h-1zM9 15h1v1h-1zM9 16h1v1h-1zM54 17h1v1h-1zM55 20h1v1h-1zM8 21h1v1h-1zM8 22h1v1h-1zM56 25h1v1h-1zM7 26h1v1h-1zM7 27h1v1h-1zM57 32h1v1h-1zM57 33h1v1h-1zM7 34h1v1h-1zM57 34h1v1h-1zM8 36h1v1h-1zM56 38h1v1h-1zM11 41h1v1h-1zM55 42h1v1h-1zM12 43h1v1h-1zM53 45h1v1h-1zM14 46h1v1h-1zM52 46h1v1h-1zM51 47h1v1h-1zM18 52h1v1h-1zM19 54h1v1h-1zM22 55h2v1h-2zM36 55h2v1h-2z"/>
<path fill="#0f9" d="M48 3h1v1h-1zM47 4h1v1h-1zM47 8h1v1h-1zM48 9h1v1h-1zM8 11h1v1h-1zM9 12h1v1h-1zM51 12h1v1h-1zM9 14h1v1h-1zM53 15h1v1h-1zM8 19h1v1h-1zM55 19h1v1h-1zM8 20h1v1h-1zM56 24h1v1h-1zM7 25h1v1h-1zM57 30h1v1h-1zM57 31h1v1h-1zM7 35h1v1h-1zM57 35h1v1h-1zM9 38h1v1h-1zM56 39h1v1h-1zM10 40h1v1h-1zM11 42h1v1h-1zM13 45h1v1h-1zM50 48h1v1h-1zM16 49h1v1h-1zM49 49h1v1h-1zM18 53h1v1h-1zM43 54h1v1h-1zM21 55h1v1h-1zM38 55h2v1h-2zM30 56h2v1h-2z"/>
<path fill="#0fb" d="M46 4h1v1h-1zM46 7h1v1h-1zM46 8h1v1h-1zM8 9h1v1h-1zM9 10h1v1h-1zM48 10h1v1h-1zM10 11h1v1h-1zM50 11h1v1h-1zM10 12h1v1h-1zM10 13h1v1h-1zM52 14h1v1h-1zM9 17h1v1h-1zM9 18h1v1h-1zM55 21h1v1h-1zM8 23h1v1h-1zM8 24h1v1h-1zM56 26h1v1h-1zM7 28h1v1h-1zM7 29h1v1h-1zM7 32h1v1h-1zM7 33h1v1h-1zM8 35h1v1h-1zM9 37h1v1h-1zM56 37h1v1h-1zM10 39h1v1h-1zM55 41h1v1h-1zM12 42h1v1h-1zM13 43h1v1h-1zM13 44h1v1h-1zM15 47h1v1h-1zM17 50h1v1h-1zM45 52h1v1h-1zM44 53h1v1h-1zM20 54h1v1h-1zM41 54h2v1h-2zM24 55h6v1h-6zM34 55h2v1h-2z"/>
<path fill="#0f8" d="M48 4h1v1h-1zM47 5h1v1h-1zM47 6h1v1h-1zM47 7h1v1h-1zM49 9h1v1h-1zM50 10h1v1h-1zM7 11h1v1h-1zM8 12h1v1h-1zM9 13h1v1h-1zM52 13h1v1h-1zM54 16h1v1h-1zM8 17h1v1h-1zM8 18h1v1h-1zM55 18h1v1h-1zM7 23h1v1h-1zM56 23h1v1h-1zM7 24h1v1h-1zM6 28h1v1h-1zM6 29h1v1h-1zM57 29h1v1h-1zM6 30h1v1h-1zM6 31h1v1h-1zM6 32h1v1h-1zM57 36h1v1h-1zM8 37h1v1h-1zM9 39h1v1h-1zM56 40h1v1h-1zM54 44h1v1h-1zM15 48h1v1h-1zM48 50h1v1h-1zM17 51h1v1h-1zM47 51h1v1h-1zM18 54h1v1h-1zM40 55h2v1h-2zM24 56h6v1h-6zM32 56h3v1h-3z"/>
<path fill="#0f6" d="M49 4h1v1h-1zM48 7h1v1h-1zM49 8h1v1h-1zM50 9h1v1h-1zM6 12h1v1h-1zM8 13h1v1h-1zM8 14h1v1h-1zM55 17h1v1h-1zM7 18h1v1h-1zM7 19h1v1h-1zM7 20h1v1h-1zM56 21h1v1h-1zM6 25h1v1h-1zM57 27h1v1h-1zM6 35h1v1h-1zM7 37h1v1h-1zM57 38h1v1h-1zM9 40h1v1h-1zM10 42h1v1h-1zM55 43h1v1h-1zM13 46h1v1h-1zM17 52h1v1h-1zM19 55h1v1h-1zM22 56h1v1h-1zM37 56h2v1h-2z"/>
<path fill="#0f7" d="M48 5h1v1h-1zM48 8h1v1h-1zM51 11h1v1h-1zM7 12h1v1h-1zM53 14h1v1h-1zM8 15h1v1h-1zM8 16h1v1h-1zM7 21h1v1h-1zM7 22h1v1h-1zM56 22h1v1h-1zM6 26h1v1h-1zM6 27h1v1h-1zM57 28h1v1h-1zM6 33h1v1h-1zM6 34h1v1h-1zM7 36h1v1h-1zM57 37h1v1h-1zM8 38h1v1h-1zM10 41h1v1h-1zM56 41h1v1h-1zM11 43h1v1h-1zM12 44h1v1h-1zM14 47h1v1h-1zM16 50h1v1h-1zM46 52h1v1h-1zM45 53h1v1h-1zM20 55h1v1h-1zM42 55h1v1h-1zM23 56h1v1h-1zM35 56h2v1h-2z"/>
<path fill="#0f5" d="M49 5h1v1h-1zM48 6h1v1h-1zM52 12h1v1h-1zM7 13h1v1h-1zM54 15h1v1h-1zM7 16h1v1h-1zM7 17h1v1h-1zM56 20h1v1h-1zM6 22h1v1h-1zM6 23h1v1h-1zM6 24h1v1h-1zM57 26h1v1h-1zM5 28h1v1h-1zM5 29h1v1h-1zM5 30h1v1h-1zM58 33h1v1h-1zM58 34h1v1h-1zM58 35h1v1h-1zM6 36h1v1h-1zM8 39h1v1h-1zM57 39h1v1h-1zM9 41h1v1h-1zM54 45h1v1h-1zM53 46h1v1h-1zM52 47h1v1h-1zM51 48h1v1h-1zM15 49h1v1h-1zM50 49h1v1h-1zM17 53h1v1h-1zM44 54h1v1h-1zM18 55h1v1h-1zM21 56h1v1h-1zM39 56h2v1h-2zM25 57h8v1h-8z"/>
<path fill="#0f3" d="M50 5h1v1h-1zM50 8h1v1h-1zM52 11h1v1h-1zM5 13h1v1h-1zM6 14h1v1h-1zM54 14h1v1h-1zM6 18h1v1h-1zM56 18h1v1h-1zM6 19h1v1h-1zM57 23h1v1h-1zM5 24h1v1h-1zM5 25h1v1h-1zM58 29h1v1h-1zM58 30h1v1h-1zM5 34h1v1h-1zM5 35h1v1h-1zM6 37h1v1h-1zM58 37h1v1h-1zM7 39h1v1h-1zM9 42h1v1h-1zM10 43h1v1h-1zM11 44h1v1h-1zM55 44h1v1h-1zM13 47h1v1h-1zM47 52h1v1h-1zM46 53h1v1h-1zM22 57h1v1h-1zM35 57h3v1h-3z"/>
<path fill="#0f2" d="M51 5h1v1h-1zM50 6h1v1h-1zM50 7h1v1h-1zM51 9h1v1h-1zM5 14h1v1h-1zM5 15h2v1h-2zM6 16h1v1h-1zM6 17h1v1h-1zM56 17h1v1h-1zM5 22h1v1h-1zM57 22h1v1h-1zM5 23h1v1h-1zM4 28h1v1h-1zM58 28h1v1h-1zM5 36h1v1h-1zM6 38h1v1h-1zM58 38h1v1h-1zM8 41h1v1h-1zM57 41h1v1h-1zM12 46h1v1h-1zM15 50h1v1h-1zM16 52h1v1h-1zM45 54h1v1h-1zM17 55h1v1h-1zM19 56h1v1h-1zM42 56h1v1h-1zM38 57h2v1h-2zM26 58h6v1h-6z"/>
<path fill="#0f4" d="M49 6h1v1h-1zM49 7h1v1h-1zM51 10h1v1h-1zM6 13h1v1h-1zM53 13h1v1h-1zM7 14h1v1h-1zM7 15h1v1h-1zM55 16h1v1h-1zM56 19h1v1h-1zM6 20h1v1h-1zM6 21h1v1h-1zM57 24h1v1h-1zM57 25h1v1h-1zM5 26h1v1h-1zM5 27h1v1h-1zM5 31h1v1h-1zM58 31h1v1h-1zM5 32h1v1h-1zM58 32h1v1h-1zM5 33h1v1h-1zM58 36h1v1h-1zM7 38h1v1h-1zM8 40h1v1h-1zM57 40h1v1h-1zM56 42h1v1h-1zM12 45h1v1h-1zM14 48h1v1h-1zM49 50h1v1h-1zM16 51h1v1h-1zM48 51h1v1h-1zM17 54h1v1h-1zM43 55h1v1h-1zM20 56h1v1h-1zM41 56h1v1h-1zM23 57h2v1h-2zM33 57h2v1h-2z"/>
<path fill="#0f1" d="M51 6h2v1h-2zM51 7h1v1h-1zM51 8h1v1h-1zM53 12h1v1h-1zM4 15h1v1h-1zM55 15h1v1h-1zM4 16h2v1h-2zM5 17h1v1h-1zM5 20h1v1h-1zM5 21h1v1h-1zM4 26h1v1h-1zM4 27h1v1h-1zM58 27h1v1h-1zM4 29h1v1h-1zM4 30h1v1h-1zM4 31h1v1h-1zM5 37h1v1h-1zM58 39h1v1h-1zM7 40h1v1h-1zM56 43h1v1h-1zM54 46h1v1h-1zM53 47h1v1h-1zM52 48h1v1h-1zM14 49h1v1h-1zM51 49h1v1h-1zM16 53h1v1h-1zM18 56h1v1h-1zM21 57h1v1h-1zM40 57h1v1h-1zM24 58h2v1h-2zM32 58h2v1h-2z"/>
<path fill="#0f0" d="M52 7h1v1h-1zM52 10h1v1h-1zM54 13h1v1h-1zM3 16h1v1h-1zM56 16h1v1h-1zM4 17h1v1h-1zM4 18h2v1h-2zM5 19h1v1h-1zM57 21h1v1h-1zM4 25h1v1h-1zM58 26h1v1h-1zM4 32h1v1h-1zM4 33h1v1h-1zM4 34h1v1h-1zM59 35h1v1h-1zM6 39h1v1h-1zM10 44h1v1h-1zM11 45h1v1h-1zM13 48h1v1h-1zM50 50h1v1h-1zM15 51h1v1h-1zM49 51h1v1h-1zM16 54h1v1h-1zM44 55h1v1h-1zM17 56h1v1h-1zM20 57h1v1h-1zM41 57h1v1h-1zM23 58h1v1h-1zM34 58h2v1h-2z"/>
<path fill="#2f0" d="M53 7h1v1h-1zM53 8h1v1h-1zM52 9h1v1h-1zM53 11h1v1h-1zM2 18h2v1h-2zM4 20h1v1h-1zM4 22h1v1h-1zM4 23h1v1h-1zM58 25h1v1h-1zM59 33h1v1h-1zM4 36h1v1h-1zM5 38h1v1h-1zM7 41h1v1h-1zM55 45h1v1h-1zM47 53h1v1h-1zM22 58h1v1h-1zM37 58h1v1h-1zM28 59h2v1h-2z"/>
<path fill="#1f0" d="M52 8h1v1h-1zM3 17h1v1h-1zM4 19h1v1h-1zM57 20h1v1h-1zM4 24h1v1h-1zM59 34h1v1h-1zM4 35h1v1h-1zM59 36h1v1h-1zM58 40h1v1h-1zM8 42h1v1h-1zM9 43h1v1h-1zM48 52h1v1h-1zM36 58h1v1h-1z"/>
<path fill="#4f0" d="M54 8h1v1h-1zM2 20h2v1h-2zM58 24h1v1h-1zM3 26h1v1h-1zM3 28h1v1h-1zM59 31h1v1h-1zM4 37h1v1h-1zM39 58h1v1h-1zM24 59h1v1h-1zM31 59h1v1h-1z"/>
<path fill="#6f0" d="M55 8h1v1h-1zM54 10h1v1h-1zM56 15h1v1h-1zM57 18h1v1h-1zM1 21h1v1h-1zM2 22h2v1h-2zM58 23h1v1h-1zM3 24h1v1h-1zM59 29h1v1h-1zM3 31h1v1h-1zM3 32h1v1h-1zM56 44h1v1h-1zM13 49h1v1h-1zM45 55h1v1h-1zM33 59h1v1h-1z"/>
<path fill="#3f0" d="M53 9h1v1h-1zM55 14h1v1h-1zM2 19h2v1h-2zM57 19h1v1h-1zM4 21h1v1h-1zM3 27h1v1h-1zM59 32h1v1h-1zM59 37h1v1h-1zM6 40h1v1h-1zM57 42h1v1h-1zM12 47h1v1h-1zM14 50h1v1h-1zM15 52h1v1h-1zM46 54h1v1h-1zM16 55h1v1h-1zM43 56h1v1h-1zM19 57h1v1h-1zM38 58h1v1h-1zM25 59h3v1h-3zM30 59h1v1h-1z"/>
<path fill="#5f0" d="M54 9h1v1h-1zM53 10h1v1h-1zM54 12h1v1h-1zM1 20h1v1h-1zM2 21h2v1h-2zM3 25h1v1h-1zM3 29h1v1h-1zM3 30h1v1h-1zM59 30h1v1h-1zM59 38h1v1h-1zM5 39h1v1h-1zM11 46h1v1h-1zM15 53h1v1h-1zM16 56h1v1h-1zM18 57h1v1h-1zM21 58h1v1h-1zM40 58h1v1h-1zM32 59h1v1h-1z"/>
<path fill="#7f0" d="M55 9h1v1h-1zM54 11h1v1h-1zM1 22h1v1h-1zM2 23h2v1h-2zM59 28h1v1h-1zM3 33h1v1h-1zM4 38h1v1h-1zM58 41h1v1h-1zM10 45h1v1h-1zM52 49h1v1h-1zM51 50h1v1h-1zM42 57h1v1h-1zM20 58h1v1h-1zM23 59h1v1h-1zM34 59h2v1h-2z"/>
<path fill="#9f0" d="M56 9h1v1h-1zM55 11h1v1h-1zM0 23h1v1h-1zM1 24h2v1h-2zM59 27h1v1h-1zM3 36h1v1h-1zM5 40h1v1h-1zM6 41h1v1h-1zM7 42h1v1h-1zM55 46h1v1h-1zM49 52h1v1h-1zM37 59h1v1h-1zM25 60h5v1h-5z"/>
<path fill="#8f0" d="M55 10h1v1h-1zM55 13h1v1h-1zM57 17h1v1h-1zM58 22h1v1h-1zM1 23h1v1h-1zM3 34h1v1h-1zM3 35h1v1h-1zM59 39h1v1h-1zM8 43h1v1h-1zM9 44h1v1h-1zM54 47h1v1h-1zM12 48h1v1h-1zM53 48h1v1h-1zM14 51h1v1h-1zM50 51h1v1h-1zM15 54h1v1h-1zM17 57h1v1h-1zM36 59h1v1h-1z"/>
<path fill="#af0" d="M56 10h1v1h-1zM55 12h1v1h-1zM57 16h1v1h-1zM58 21h1v1h-1zM0 24h1v1h-1zM1 25h2v1h-2zM2 26h1v1h-1zM60 36h1v1h-1zM3 37h1v1h-1zM4 39h1v1h-1zM57 43h1v1h-1zM14 52h1v1h-1zM48 53h1v1h-1zM15 55h1v1h-1zM44 56h1v1h-1zM16 57h1v1h-1zM19 58h1v1h-1zM41 58h1v1h-1zM22 59h1v1h-1zM38 59h1v1h-1zM30 60h1v1h-1z"/>
<path fill="#bf0" d="M56 11h1v1h-1zM56 14h1v1h-1zM0 25h1v1h-1zM1 26h1v1h-1zM59 26h1v1h-1zM2 27h1v1h-1zM2 28h1v1h-1zM60 35h1v1h-1zM59 40h1v1h-1zM11 47h1v1h-1zM47 54h1v1h-1zM39 59h1v1h-1zM31 60h1v1h-1z"/>
<path fill="#cf0" d="M57 11h1v1h-1zM56 12h1v1h-1zM58 20h1v1h-1zM59 25h1v1h-1zM0 26h1v1h-1zM0 27h2v1h-2zM1 28h1v1h-1zM2 29h1v1h-1zM60 34h1v1h-1zM60 37h1v1h-1zM13 50h1v1h-1zM46 55h1v1h-1zM21 59h1v1h-1zM24 60h1v1h-1zM32 60h1v1h-1z"/>
<path fill="#ef0" d="M57 12h1v1h-1zM57 15h1v1h-1zM58 19h1v1h-1zM59 24h1v1h-1zM0 29h1v1h-1zM0 30h2v1h-2zM1 31h1v1h-1zM2 32h1v1h-1zM60 32h1v1h-1zM2 33h1v1h-1zM60 38h1v1h-1zM58 42h1v1h-1zM9 45h1v1h-1zM12 49h1v1h-1zM40 59h1v1h-1zM23 60h1v1h-1zM34 60h1v1h-1z"/>
<path fill="#ff0" d="M58 12h1v1h-1zM57 13h1v1h-1zM57 14h1v1h-1zM0 31h1v1h-1zM60 31h1v1h-1zM0 32h2v1h-2zM1 33h1v1h-1zM2 34h1v1h-1zM2 35h1v1h-1zM6 42h1v1h-1zM7 43h1v1h-1zM8 44h1v1h-1zM13 51h1v1h-1zM14 54h1v1h-1zM15 57h1v1h-1zM17 58h1v1h-1zM20 59h1v1h-1zM35 60h2v1h-2zM26 61h3v1h-3z"/>
<path fill="#df0" d="M56 13h1v1h-1zM0 28h1v1h-1zM1 29h1v1h-1zM2 30h1v1h-1zM2 31h1v1h-1zM60 33h1v1h-1zM3 38h1v1h-1zM56 45h1v1h-1zM10 46h1v1h-1zM14 53h1v1h-1zM15 56h1v1h-1zM43 57h1v1h-1zM18 58h1v1h-1zM33 60h1v1h-1z"/>
<path fill="#fe0" d="M58 13h2v1h-2zM58 14h1v1h-1zM58 18h1v1h-1zM59 23h1v1h-1zM60 29h1v1h-1zM60 30h1v1h-1zM0 33h1v1h-1zM0 34h2v1h-2zM0 35h2v1h-2zM0 36h3v1h-3zM1 37h2v1h-2zM2 38h1v1h-1zM3 39h1v1h-1zM60 39h1v1h-1zM4 40h1v1h-1zM5 41h1v1h-1zM57 44h1v1h-1zM55 47h1v1h-1zM11 48h1v1h-1zM54 48h1v1h-1zM53 49h1v1h-1zM52 50h1v1h-1zM51 51h1v1h-1zM13 52h1v1h-1zM50 52h1v1h-1zM49 53h1v1h-1zM14 55h1v1h-1zM45 56h1v1h-1zM15 58h2v1h-2zM42 58h1v1h-1zM14 59h2v1h-2zM19 59h1v1h-1zM22 60h1v1h-1zM37 60h2v1h-2zM25 61h1v1h-1zM29 61h2v1h-2z"/>
<path fill="#fd0" d="M59 14h1v1h-1zM58 15h1v1h-1zM58 17h1v1h-1zM59 22h1v1h-1zM60 27h1v1h-1zM60 28h1v1h-1zM0 37h1v1h-1zM0 38h2v1h-2zM59 41h1v1h-1zM56 46h1v1h-1zM10 47h1v1h-1zM12 50h1v1h-1zM48 54h1v1h-1zM47 55h1v1h-1zM44 57h1v1h-1zM14 58h1v1h-1zM16 59h3v1h-3zM15 60h7v1h-7zM39 60h1v1h-1zM16 61h4v1h-4zM24 61h1v1h-1zM31 61h2v1h-2z"/>
<path fill="#fc0" d="M59 15h1v1h-1zM58 16h1v1h-1zM59 21h1v1h-1zM60 26h1v1h-1zM61 36h1v1h-1zM61 37h1v1h-1zM0 39h3v1h-3zM58 43h1v1h-1zM8 45h1v1h-1zM9 46h1v1h-1zM13 53h1v1h-1zM14 56h1v1h-1zM14 57h1v1h-1zM13 59h1v1h-1zM41 59h1v1h-1zM20 61h4v1h-4zM33 61h3v1h-3zM18 62h9v1h-9zM20 63h4v1h-4z"/>
<path fill="#fb0" d="M60 15h1v1h-1zM59 16h1v1h-1zM59 17h1v1h-1zM59 20h1v1h-1zM60 25h1v1h-1zM61 34h1v1h-1zM61 35h1v1h-1zM61 38h1v1h-1zM3 40h1v1h-1zM60 40h1v1h-1zM4 41h1v1h-1zM5 42h1v1h-1zM6 43h1v1h-1zM7 44h1v1h-1zM11 49h1v1h-1zM12 51h1v1h-1zM13 54h1v1h-1zM46 56h1v1h-1zM13 58h1v1h-1zM43 58h1v1h-1zM36 61h2v1h-2zM27 62h3v1h-3zM24 63h4v1h-4zM23 64h4v1h-4z"/>
<path fill="#00f" d="M26 16h1v1h-1zM25 17h2v1h-2zM25 18h2v1h-2zM24 19h2v1h-2zM28 19h1v1h-1zM23 20h2v1h-2zM30 20h1v1h-1zM22 21h3v1h-3zM49 21h1v1h-1zM22 22h2v1h-2zM33 22h1v1h-1zM37 22h4v1h-4zM47 22h2v1h-2zM21 23h2v1h-2zM46 23h2v1h-2zM20 24h2v1h-2zM45 24h2v1h-2zM19 25h2v1h-2zM43 25h3v1h-3zM18 26h3v1h-3zM43 26h2v1h-2zM19 27h3v1h-3zM43 27h2v1h-2zM21 28h2v1h-2zM43 28h2v1h-2zM22 29h3v1h-3zM43 29h1v1h-1zM23 30h3v1h-3zM42 30h2v1h-2zM24 31h2v1h-2zM42 31h1v1h-1zM41 32h1v1h-1zM26 33h1v1h-1zM41 33h1v1h-1zM38 34h3v1h-3zM36 35h1v1h-1zM30 36h1v1h-1zM33 37h1v1h-1z"/>
<path fill="#fa0" d="M60 16h2v1h-2zM60 17h1v1h-1zM59 18h1v1h-1zM59 19h1v1h-1zM60 24h1v1h-1zM61 32h1v1h-1zM61 33h1v1h-1zM0 40h3v1h-3zM59 42h1v1h-1zM57 45h1v1h-1zM10 48h1v1h-1zM55 48h1v1h-1zM54 49h1v1h-1zM53 50h1v1h-1zM52 51h1v1h-1zM12 52h1v1h-1zM51 52h1v1h-1zM50 53h1v1h-1zM13 55h1v1h-1zM13 57h1v1h-1zM12 58h1v1h-1zM40 60h1v1h-1zM38 61h1v1h-1zM30 62h2v1h-2zM28 63h3v1h-3zM27 64h3v1h-3z"/>
<path fill="#f90" d="M61 17h1v1h-1zM60 18h1v1h-1zM60 23h1v1h-1zM61 30h1v1h-1zM61 31h1v1h-1zM61 39h1v1h-1zM0 41h1v1h-1zM9 47h1v1h-1zM56 47h1v1h-1zM49 54h1v1h-1zM48 55h1v1h-1zM13 56h1v1h-1zM12 57h1v1h-1zM45 57h1v1h-1zM42 59h1v1h-1zM39 61h1v1h-1zM32 62h2v1h-2zM31 63h2v1h-2zM30 64h2v1h-2z"/>
<path fill="#f80" d="M61 18h1v1h-1zM60 19h1v1h-1zM60 22h1v1h-1zM61 28h1v1h-1zM61 29h1v1h-1zM1 41h3v1h-3zM60 41h1v1h-1zM5 43h1v1h-1zM6 44h1v1h-1zM58 44h1v1h-1zM7 45h1v1h-1zM8 46h1v1h-1zM11 50h1v1h-1zM12 53h1v1h-1zM12 56h1v1h-1zM47 56h1v1h-1zM44 58h1v1h-1zM34 62h3v1h-3zM33 63h2v1h-2zM32 64h3v1h-3z"/>
<path fill="#f70" d="M62 18h1v1h-1zM61 19h2v1h-2zM60 20h1v1h-1zM60 21h1v1h-1zM61 26h1v1h-1zM61 27h1v1h-1zM62 37h1v1h-1zM62 38h1v1h-1zM1 42h2v1h-2zM4 42h1v1h-1zM57 46h1v1h-1zM10 49h1v1h-1zM11 51h1v1h-1zM12 54h1v1h-1zM12 55h1v1h-1zM11 57h1v1h-1zM41 60h1v1h-1zM37 62h2v1h-2zM35 63h3v1h-3zM35 64h2v1h-2z"/>
<path fill="#10f" d="M26 19h2v1h-2zM25 20h2v1h-2zM29 20h1v1h-1zM25 21h2v1h-2zM31 21h1v1h-1zM24 22h2v1h-2zM32 22h1v1h-1zM41 22h3v1h-3zM45 22h2v1h-2zM23 23h2v1h-2zM43 23h3v1h-3zM22 24h2v1h-2zM42 24h3v1h-3zM21 25h2v1h-2zM41 25h2v1h-2zM21 26h2v1h-2zM41 26h2v1h-2zM22 27h3v1h-3zM41 27h2v1h-2zM23 28h3v1h-3zM41 28h2v1h-2zM25 29h2v1h-2zM41 29h2v1h-2zM26 30h1v1h-1zM41 30h1v1h-1zM41 31h1v1h-1zM25 32h1v1h-1zM40 32h1v1h-1zM39 33h2v1h-2zM28 34h1v1h-1zM37 34h1v1h-1zM29 35h1v1h-1zM34 36h1v1h-1zM32 37h1v1h-1z"/>
<path fill="#20f" d="M27 20h2v1h-2zM27 21h2v1h-2zM30 21h1v1h-1zM26 22h2v1h-2zM44 22h1v1h-1zM25 23h2v1h-2zM33 23h3v1h-3zM41 23h2v1h-2zM24 24h2v1h-2zM40 24h2v1h-2zM23 25h2v1h-2zM39 25h2v1h-2zM23 26h3v1h-3zM39 26h2v1h-2zM25 27h2v1h-2zM39 27h2v1h-2zM26 28h2v1h-2zM39 28h2v1h-2zM27 29h1v1h-1zM39 29h2v1h-2zM27 30h1v1h-1zM39 30h2v1h-2zM26 31h1v1h-1zM39 31h2v1h-2zM27 33h1v1h-1zM38 33h1v1h-1zM35 35h1v1h-1zM31 36h1v1h-1zM33 36h1v1h-1z"/>
<path fill="#f60" d="M61 20h2v1h-2zM61 21h1v1h-1zM61 25h1v1h-1zM62 35h1v1h-1zM62 36h1v1h-1zM63 37h1v1h-1zM63 38h2v1h-2zM61 40h1v1h-1zM3 42h1v1h-1zM59 43h1v1h-1zM9 48h1v1h-1zM11 52h1v1h-1zM11 56h1v1h-1zM46 57h1v1h-1zM43 59h1v1h-1zM38 63h1v1h-1zM37 64h2v1h-2z"/>
<path fill="#f50" d="M63 20h1v1h-1zM62 21h1v1h-1zM61 22h1v1h-1zM62 33h1v1h-1zM62 34h1v1h-1zM63 35h1v1h-1zM63 36h2v1h-2zM64 37h1v1h-1zM62 39h3v1h-3zM1 43h3v1h-3zM58 45h1v1h-1zM7 46h1v1h-1zM8 47h1v1h-1zM56 48h1v1h-1zM55 49h1v1h-1zM10 50h1v1h-1zM54 50h1v1h-1zM53 51h1v1h-1zM52 52h1v1h-1zM11 53h1v1h-1zM51 53h1v1h-1zM50 54h1v1h-1zM11 55h1v1h-1zM49 55h1v1h-1zM10 56h1v1h-1zM40 61h1v1h-1zM39 62h1v1h-1zM39 63h1v1h-1zM39 64h1v1h-1z"/>
<path fill="#30f" d="M29 21h1v1h-1zM28 22h2v1h-2zM31 22h1v1h-1zM27 23h2v1h-2zM32 23h1v1h-1zM36 23h5v1h-5zM26 24h2v1h-2zM38 24h2v1h-2zM25 25h2v1h-2zM37 25h2v1h-2zM26 26h2v1h-2zM37 26h2v1h-2zM27 27h3v1h-3zM37 27h2v1h-2zM28 28h1v1h-1zM37 28h2v1h-2zM28 29h1v1h-1zM37 29h2v1h-2zM38 30h1v1h-1zM26 32h1v1h-1zM39 32h1v1h-1zM36 34h1v1h-1zM30 35h1v1h-1z"/>
<path fill="#f40" d="M63 21h1v1h-1zM62 22h1v1h-1zM61 23h1v1h-1zM61 24h1v1h-1zM62 31h1v1h-1zM62 32h1v1h-1zM63 33h1v1h-1zM63 34h2v1h-2zM64 35h1v1h-1zM62 40h3v1h-3zM60 42h1v1h-1zM4 43h1v1h-1zM5 44h1v1h-1zM6 45h1v1h-1zM11 54h1v1h-1zM10 55h1v1h-1zM48 56h1v1h-1zM45 58h1v1h-1zM42 60h1v1h-1zM40 62h1v1h-1zM40 63h1v1h-1zM40 64h1v1h-1z"/>
<path fill="#40f" d="M30 22h1v1h-1zM29 23h2v1h-2zM28 24h2v1h-2zM36 24h2v1h-2zM27 25h3v1h-3zM35 25h2v1h-2zM28 26h3v1h-3zM35 26h2v1h-2zM35 27h2v1h-2zM29 28h1v1h-1zM36 28h1v1h-1zM37 30h1v1h-1zM27 31h1v1h-1zM38 31h1v1h-1zM28 33h1v1h-1zM37 33h1v1h-1zM29 34h1v1h-1zM34 35h1v1h-1zM32 36h1v1h-1z"/>
<path fill="#f30" d="M63 22h1v1h-1zM62 23h2v1h-2zM62 29h1v1h-1zM62 30h1v1h-1zM63 31h1v1h-1zM63 32h2v1h-2zM64 33h1v1h-1zM61 41h4v1h-4zM1 44h3v1h-3zM59 44h1v1h-1zM57 47h1v1h-1zM9 49h1v1h-1zM10 51h1v1h-1zM10 54h1v1h-1zM9 56h1v1h-1zM47 57h1v1h-1zM41 61h1v1h-1zM41 62h1v1h-1zM41 63h1v1h-1zM41 64h1v1h-1z"/>
<path fill="#50f" d="M31 23h1v1h-1zM30 24h6v1h-6zM30 25h2v1h-2zM33 25h2v1h-2zM34 26h1v1h-1zM30 27h1v1h-1zM35 28h1v1h-1zM36 29h1v1h-1zM28 30h1v1h-1zM37 31h1v1h-1zM27 32h1v1h-1zM38 32h1v1h-1zM35 34h1v1h-1zM31 35h1v1h-1zM33 35h1v1h-1z"/>
<path fill="#f20" d="M64 23h1v1h-1zM62 24h2v1h-2zM62 25h1v1h-1zM62 27h1v1h-1zM62 28h1v1h-1zM63 29h1v1h-1zM63 30h2v1h-2zM64 31h1v1h-1zM61 42h3v1h-3zM4 44h1v1h-1zM2 45h1v1h-1zM8 48h1v1h-1zM10 52h1v1h-1zM10 53h1v1h-1zM9 55h1v1h-1zM44 59h1v1h-1zM42 61h1v1h-1zM42 62h1v1h-1zM42 63h1v1h-1z"/>
<path fill="#f10" d="M64 24h1v1h-1zM63 25h1v1h-1zM62 26h1v1h-1zM63 27h2v1h-2zM63 28h2v1h-2zM64 29h1v1h-1zM60 43h2v1h-2zM63 43h1v1h-1zM3 45h3v1h-3zM6 46h1v1h-1zM58 46h1v1h-1zM7 47h1v1h-1zM9 50h1v1h-1zM53 52h1v1h-1zM52 53h1v1h-1zM9 54h1v1h-1zM51 54h1v1h-1zM8 55h1v1h-1zM50 55h1v1h-1zM46 58h1v1h-1zM43 60h1v1h-1zM43 61h1v1h-1zM43 62h1v1h-1zM43 63h1v1h-1z"/>
<path fill="#70f" d="M32 25h1v1h-1zM31 27h1v1h-1zM34 28h1v1h-1zM35 29h1v1h-1zM29 30h1v1h-1zM36 31h1v1h-1zM28 32h1v1h-1zM37 32h1v1h-1zM29 33h1v1h-1zM34 34h1v1h-1zM32 35h1v1h-1z"/>
<path fill="#f00" d="M64 25h1v1h-1zM63 26h2v1h-2zM62 43h1v1h-1zM60 44h4v1h-4zM59 45h4v1h-4zM2 46h4v1h-4zM59 46h4v1h-4zM3 47h4v1h-4zM58 47h4v1h-4zM3 48h5v1h-5zM57 48h5v1h-5zM4 49h5v1h-5zM56 49h5v1h-5zM5 50h4v1h-4zM55 50h5v1h-5zM5 51h5v1h-5zM54 51h6v1h-6zM6 52h4v1h-4zM54 52h5v1h-5zM7 53h3v1h-3zM53 53h5v1h-5zM8 54h1v1h-1zM52 54h5v1h-5zM51 55h6v1h-6zM49 56h7v1h-7zM48 57h6v1h-6zM47 58h6v1h-6zM45 59h7v1h-7zM44 60h6v1h-6zM44 61h5v1h-5zM44 62h3v1h-3zM44 63h1v1h-1z"/>
<path fill="#60f" d="M31 26h1v1h-1zM33 26h1v1h-1zM34 27h1v1h-1zM30 28h1v1h-1zM29 29h1v1h-1zM36 30h1v1h-1zM28 31h1v1h-1zM36 33h1v1h-1zM30 34h1v1h-1z"/>
<path fill="#80f" d="M32 26h1v1h-1zM33 27h1v1h-1zM30 29h1v1h-1zM34 29h1v1h-1zM35 30h1v1h-1zM29 31h1v1h-1zM35 33h1v1h-1zM31 34h1v1h-1zM33 34h1v1h-1z"/>
<path fill="#a0f" d="M32 27h1v1h-1zM31 29h1v1h-1zM33 29h1v1h-1zM34 30h1v1h-1zM30 31h1v1h-1zM29 32h1v1h-1zM32 34h1v1h-1z"/>
<path fill="#90f" d="M31 28h1v1h-1zM33 28h1v1h-1zM30 30h1v1h-1zM35 31h1v1h-1zM36 32h1v1h-1zM30 33h1v1h-1zM34 33h1v1h-1z"/>
<path fill="#b0f" d="M32 28h1v1h-1zM31 30h1v1h-1zM34 31h1v1h-1zM35 32h1v1h-1zM31 33h1v1h-1zM33 33h1v1h-1z"/>
<path fill="#c0f" d="M32 29h1v1h-1zM33 30h1v1h-1zM30 32h1v1h-1zM34 32h1v1h-1z"/>
<path fill="#d0f" d="M32 30h1v1h-1zM31 31h1v1h-1zM33 31h1v1h-1zM32 33h1v1h-1z"/>
<path fill="#f0f" d="M32 31h1v1h-1zM32 32h1v1h-1z"/>
<path fill="#e0f" d="M31 32h1v1h-1zM33 32h1v1h-1z"/>
</g></g>
<g clip-path="url(#tc)" font-family="Liberation Sans, sans-serif" font-size="8.3" text-anchor="middle" fill="#000">
<circle cx="570.0" cy="231.5" r="1.55" fill="#00dcdc" stroke="#0c2c3c" stroke-width="0.8"/>
<text x="571.4" y="241.8">449.85</text>
<circle cx="570.0" cy="197.5" r="1.55" fill="#00dcdc" stroke="#0c2c3c" stroke-width="0.8"/>
<text x="571.4" y="207.8">464.61</text>
<circle cx="604.0" cy="231.5" r="1.55" fill="#00dcdc" stroke="#0c2c3c" stroke-width="0.8"/>
<text x="605.4" y="241.8">470.70</text>
<circle cx="570.0" cy="265.5" r="1.55" fill="#00dcdc" stroke="#0c2c3c" stroke-width="0.8"/>
<text x="571.4" y="275.8">482.67</text>
<circle cx="536.0" cy="231.5" r="1.55" fill="#00dcdc" stroke="#0c2c3c" stroke-width="0.8"/>
<text x="537.4" y="241.8">474.34</text>
<circle cx="595.8" cy="169.2" r="1.55" fill="#00dcdc" stroke="#0c2c3c" stroke-width="0.8"/>
<text x="597.2" y="179.5">493.77</text>
<circle cx="632.3" cy="205.7" r="1.55" fill="#00dcdc" stroke="#0c2c3c" stroke-width="0.8"/>
<text x="633.7" y="216.0">475.32</text>
<circle cx="632.3" cy="257.3" r="1.55" fill="#00dcdc" stroke="#0c2c3c" stroke-width="0.8"/>
<text x="633.7" y="267.6">483.90</text>
<circle cx="595.8" cy="293.8" r="1.55" fill="#00dcdc" stroke="#0c2c3c" stroke-width="0.8"/>
<text x="597.2" y="304.1">486.97</text>
<circle cx="544.2" cy="293.8" r="1.55" fill="#00dcdc" stroke="#0c2c3c" stroke-width="0.8"/>
<text x="545.6" y="304.1">481.29</text>
<circle cx="507.7" cy="257.3" r="1.55" fill="#00dcdc" stroke="#0c2c3c" stroke-width="0.8"/>
<text x="509.1" y="267.6">476.38</text>
<circle cx="507.7" cy="205.7" r="1.55" fill="#00dcdc" stroke="#0c2c3c" stroke-width="0.8"/>
<text x="509.1" y="216.0">473.77</text>
<circle cx="544.2" cy="169.2" r="1.55" fill="#00dcdc" stroke="#0c2c3c" stroke-width="0.8"/>
<text x="545.6" y="179.5">472.84</text>
<circle cx="570.0" cy="130.2" r="1.55" fill="#00dcdc" stroke="#0c2c3c" stroke-width="0.8"/>
<text x="571.4" y="140.5">497.60</text>
<circle cx="620.6" cy="143.8" r="1.55" fill="#00dcdc" stroke="#0c2c3c" stroke-width="0.8"/>
<text x="622.0" y="154.1">487.09</text>
<circle cx="657.7" cy="180.8" r="1.55" fill="#00dcdc" stroke="#0c2c3c" stroke-width="0.8"/>
<text x="659.1" y="191.2">475.04</text>
<circle cx="671.3" cy="231.5" r="1.55" fill="#00dcdc" stroke="#0c2c3c" stroke-width="0.8"/>
<text x="672.7" y="241.8">484.24</text>
<circle cx="657.7" cy="282.1" r="1.55" fill="#00dcdc" stroke="#0c2c3c" stroke-width="0.8"/>
<text x="659.1" y="292.4">483.62</text>
<circle cx="620.6" cy="319.2" r="1.55" fill="#00dcdc" stroke="#0c2c3c" stroke-width="0.8"/>
<text x="622.0" y="329.5">489.45</text>
<circle cx="570.0" cy="332.8" r="1.55" fill="#00dcdc" stroke="#0c2c3c" stroke-width="0.8"/>
<text x="571.4" y="343.1">497.49</text>
<circle cx="519.4" cy="319.2" r="1.55" fill="#00dcdc" stroke="#0c2c3c" stroke-width="0.8"/>
<text x="520.8" y="329.5">486.65</text>
<circle cx="482.3" cy="282.2" r="1.55" fill="#00dcdc" stroke="#0c2c3c" stroke-width="0.8"/>
<text x="483.7" y="292.5">501.75</text>
<circle cx="468.7" cy="231.5" r="1.55" fill="#00dcdc" stroke="#0c2c3c" stroke-width="0.8"/>
<text x="470.1" y="241.8">487.79</text>
<circle cx="482.3" cy="180.8" r="1.55" fill="#00dcdc" stroke="#0c2c3c" stroke-width="0.8"/>
<text x="483.7" y="191.2">484.26</text>
<circle cx="519.3" cy="143.8" r="1.55" fill="#00dcdc" stroke="#0c2c3c" stroke-width="0.8"/>
<text x="520.7" y="154.1">478.14</text>
<circle cx="596.3" cy="99.1" r="1.55" fill="#00dcdc" stroke="#0c2c3c" stroke-width="0.8"/>
<text x="597.7" y="109.4">474.15</text>
<circle cx="645.0" cy="119.3" r="1.55" fill="#00dcdc" stroke="#0c2c3c" stroke-width="0.8"/>
<text x="646.4" y="129.6">510.37</text>
<circle cx="682.2" cy="156.5" r="1.55" fill="#00dcdc" stroke="#0c2c3c" stroke-width="0.8"/>
<text x="683.6" y="166.8">527.61</text>
<circle cx="702.4" cy="205.2" r="1.55" fill="#00dcdc" stroke="#0c2c3c" stroke-width="0.8"/>
<text x="703.8" y="215.5">546.18</text>
<circle cx="702.4" cy="257.8" r="1.55" fill="#00dcdc" stroke="#0c2c3c" stroke-width="0.8"/>
<text x="703.8" y="268.1">537.65</text>
<circle cx="682.2" cy="306.5" r="1.55" fill="#00dcdc" stroke="#0c2c3c" stroke-width="0.8"/>
<text x="683.6" y="316.8">556.72</text>
<circle cx="645.0" cy="343.7" r="1.55" fill="#00dcdc" stroke="#0c2c3c" stroke-width="0.8"/>
<text x="646.4" y="354.0">556.55</text>
<circle cx="596.3" cy="363.9" r="1.55" fill="#00dcdc" stroke="#0c2c3c" stroke-width="0.8"/>
<text x="597.7" y="374.2">537.95</text>
<circle cx="543.7" cy="363.9" r="1.55" fill="#00dcdc" stroke="#0c2c3c" stroke-width="0.8"/>
<text x="545.1" y="374.2">530.58</text>
<circle cx="495.0" cy="343.7" r="1.55" fill="#00dcdc" stroke="#0c2c3c" stroke-width="0.8"/>
<text x="496.4" y="354.0">526.86</text>
<circle cx="457.8" cy="306.5" r="1.55" fill="#00dcdc" stroke="#0c2c3c" stroke-width="0.8"/>
<text x="459.2" y="316.8">557.94</text>
<circle cx="437.6" cy="257.8" r="1.55" fill="#00dcdc" stroke="#0c2c3c" stroke-width="0.8"/>
<text x="439.0" y="268.1">527.86</text>
<circle cx="437.6" cy="205.2" r="1.55" fill="#00dcdc" stroke="#0c2c3c" stroke-width="0.8"/>
<text x="439.0" y="215.5">522.40</text>
<circle cx="457.8" cy="156.5" r="1.55" fill="#00dcdc" stroke="#0c2c3c" stroke-width="0.8"/>
<text x="459.2" y="166.8">510.92</text>
<circle cx="495.0" cy="119.3" r="1.55" fill="#00dcdc" stroke="#0c2c3c" stroke-width="0.8"/>
<text x="496.4" y="129.6">484.28</text>
<circle cx="543.7" cy="99.1" r="1.55" fill="#00dcdc" stroke="#0c2c3c" stroke-width="0.8"/>
<text x="545.1" y="109.4">479.17</text>
</g></svg>

<div class="t cj" style="left:533px;top:386px">样品直径:<span style="font-size:8.3px">200 mm</span></div>
<!-- control group -->
<div class="gb" style="left:396px;top:402px;width:348px;height:60px;background:#f2f2f2;border-color:#e2e2e2"></div>
<div class="btn" style="left:402.5px;top:414px;width:50px;height:16.5px;padding-top:1.9px">开始</div>
<div class="btn" style="left:458.5px;top:414px;width:42px;height:16.5px;padding-top:1.9px;color:#a8a8a8;border-color:#e4e4e4;background:#f6f6f6">停止</div>
<div class="btn" style="left:506.5px;top:414px;width:43px;height:16.5px;padding-top:1.9px">新</div>
<div class="btn" style="left:555px;top:414px;width:49.5px;height:16.5px;padding-top:1.9px">移动至<span style="color:#9c9c9c;font-size:9px">...</span></div>
<div class="btn" style="left:610.5px;top:414px;width:58.5px;height:16.5px;padding-top:1.9px">基准<span style="color:#9c9c9c;font-size:9px">...</span></div>
<div class="btn" style="left:674.5px;top:414px;width:65px;height:16.5px;padding-top:1.9px">重新分析</div>
<div class="t cj" style="left:412px;top:443px">配方:</div>
<div class="abs" style="left:441px;top:442.5px;width:149px;height:11.5px;background:#fff;border-left:1px solid #a0a0a0;border-top:1px solid #c4c4c4;padding:0.4px 0 0 2px;white-space:nowrap">SiO2 on Si F54-XY</div>
<div class="abs" style="left:591px;top:443px;width:10px;height:10.5px;background:#fcfcfc;border:1px solid #dadada;border-radius:1.5px"></div>
<svg class="abs" style="left:591px;top:443px" width="10" height="11" viewBox="0 0 10 11"><path d="M2.6 4.3 L7.4 4.3 L5 7.2 Z" fill="#111"/></svg>
<div class="btn" style="left:610.5px;top:440.5px;width:58.5px;height:16.5px;padding-top:1.9px">编辑<span style="color:#9c9c9c;font-size:9px">...</span></div>

<!-- right panel: display group -->
<div class="gb" style="left:1057px;top:92.3px;width:173px;height:188.5px"></div>
<div class="t cj" style="left:1062px;top:88px;background:#f0f0f0;padding:0 1px">显示</div>
<div class="t cj" style="left:1080px;top:97px;background:#f0f0f0">要显示的参数:</div>
<div class="abs" style="left:1078px;top:108.6px;width:131px;height:15.5px;background:#fff;border:1px solid #d6d6d6;border-radius:2px;padding:3px 0 0 2px;font-size:8.6px;white-space:nowrap">Site 1 Layer 1 Thickness</div>
<svg class="abs" style="left:1198px;top:113px" width="9" height="8" viewBox="0 0 9 8"><path d="M2 2.8 L4.5 5.3 L7 2.8" fill="none" stroke="#7a7a7a" stroke-width=".8"/></svg>
<div class="abs" style="left:1069px;top:143.5px;width:156px;height:43px;background:#f3f3f3;border:1px solid #e4e4e4"></div>
<div class="abs" style="left:1069px;top:128.5px;width:32px;height:15.5px;background:#f8f8f8;border:1px solid #e6e6e6;border-bottom:none;padding:2.2px 0 0 4px">2D</div>
<div class="abs" style="left:1101px;top:130px;width:29px;height:13.5px;background:#f0f0f0;border:1px solid #e2e2e2;border-left:none;border-bottom:none;padding:2.3px 0 0 3.5px">3D</div>
<div class="cb on" style="left:1073px;top:150px"></div>
<div class="cb on" style="left:1073px;top:171px"></div>
<div class="cb on" style="left:1147.5px;top:171px"></div>
<svg class="abs" style="left:0;top:0" width="1268" height="686" viewBox="0 0 1268 686"><g fill="none" stroke="#fff" stroke-width="1"><path d="M1074.8 154.2 l1.6 1.6 l3 -3.4"/><path d="M1074.8 175.2 l1.6 1.6 l3 -3.4"/><path d="M1149.3 175.2 l1.6 1.6 l3 -3.4"/></g></svg>
<div class="t cj" style="left:1085.5px;top:149px">显示颜色 量</div>
<div class="t cj" style="left:1085.5px;top:170px">显示点数</div>
<div class="t cj" style="left:1161px;top:170px">显示值</div>
<div class="cb off" style="left:1103.5px;top:192.5px"></div>
<div class="t cj" style="left:1116px;top:191.5px">手动设置色</div>
<div class="gb" style="left:1096.5px;top:212px;width:103px;height:40.5px"></div>
<div class="t cj" style="left:1102px;top:207px;background:#f0f0f0;padding:0 1px">色标范围</div>
<div class="t cj" style="left:1107px;top:223px">最</div>
<div class="t cj" style="left:1107px;top:239px">最</div>
<div class="abs" style="left:1122px;top:220.4px;width:43.5px;height:13.4px;background:#f1f1f1;border:1px solid #b0b0b0;color:#8e8a90;padding:2.6px 0 0 1.5px">449.85</div>
<div class="abs" style="left:1122px;top:236.3px;width:43.5px;height:13.4px;background:#f1f1f1;border:1px solid #b0b0b0;color:#8e8a90;padding:2.6px 0 0 1.5px">557.94</div>
<div class="t" style="left:1171.5px;top:223.6px">nm</div>
<div class="t" style="left:1171.5px;top:239.4px">nm</div>
<div class="btn" style="left:1120.5px;top:258px;width:52px;height:16.8px;border-color:#3d8fdc;padding-top:2.3px">重新绘制</div>
<!-- right side scroll lines -->
<div class="abs" style="left:1238.2px;top:89px;width:1px;height:192px;background:#dadada"></div>
<div class="abs" style="left:1236.2px;top:181px;width:4px;height:5px;border:1px solid #c4c4c4;background:#f0f0f0"></div>
<div class="abs" style="left:1255px;top:176px;width:1.3px;height:105px;background:#555"></div>
<div class="abs" style="left:1255px;top:283px;width:1.3px;height:180px;background:#555"></div>

<!-- results group -->
<div class="gb" style="left:1057px;top:290.3px;width:173.5px;height:190px;border-bottom:none"></div>
<div class="t cj" style="left:1062px;top:286px;background:#f0f0f0;padding:0 1px">结果</div>
<div class="t cj" style="right:140.0px;top:302.2px">最小值:</div><div class="box" style="left:1133.3px;top:300.0px;width:58.5px;height:14.4px">449.85 nm</div>
<div class="t cj" style="right:140.0px;top:318.2px">最大值:</div><div class="box" style="left:1133.3px;top:316.0px;width:58.5px;height:14.4px">557.94 nm</div>
<div class="t cj" style="right:140.0px;top:334.2px">平均值:</div><div class="box" style="left:1133.3px;top:332.0px;width:58.5px;height:14.4px">498.21 nm</div>
<div class="t cj" style="right:140.0px;top:349.2px">标准差:</div><div class="box" style="left:1133.3px;top:347.0px;width:58.5px;height:14.4px">28.01 nm</div>
<div class="t cj" style="right:140.0px;top:365.2px">范围:</div><div class="box" style="left:1133.3px;top:363.0px;width:58.5px;height:14.4px">108.09 nm</div>
<div class="t cj" style="right:140.0px;top:381.2px">均匀度:</div><div class="box" style="left:1133.3px;top:379.0px;width:58.5px;height:14.4px">+/- 10.8 %</div>
<div class="t " style="right:140.0px;top:396.2px;top:397.6px;color:#333">CTE:</div><div class="box" style="left:1133.3px;top:394.0px;width:58.5px;height:14.4px">76.00 nm</div>
<div class="t cj" style="right:140.0px;top:412.2px">楔形:</div><div class="box" style="left:1133.3px;top:410.0px;width:58.5px;height:14.4px">44.15 nm</div>
<div class="t cj" style="right:140.0px;top:428.2px">楔形角度:</div><div class="box" style="left:1133.3px;top:426.0px;width:58.5px;height:14.4px">-75</div>
<div class="t cj" style="right:140.0px;top:444.2px">有效:</div><div class="box" style="left:1133.3px;top:442.0px;width:58.5px;height:14.4px">41/41</div>
<div class="t cj" style="right:140.0px;top:459.2px">报警:</div><div class="box" style="left:1133.3px;top:457.0px;width:58.5px;height:14.4px">N/A</div>


<!-- splitter -->
<div class="abs" style="left:9.2px;top:473px;width:1250px;height:205px;background:#f0f0f0"></div>
<div class="abs" style="left:1259px;top:479px;width:1.2px;height:199px;background:#969696"></div>
<div class="abs" style="left:8px;top:463px;width:2px;height:15px;background:#f0f0f0"></div>
<div class="abs" style="left:23px;top:474.9px;width:1030px;height:1.2px;background:#7e7e7e"></div>
<div class="abs" style="left:1057px;top:466px;width:1px;height:9.6px;background:#dcdcdc"></div>
<div class="abs" style="left:8px;top:478.1px;width:1252px;height:1.1px;background:#a4a4a4"></div>
<div class="abs" style="left:9.2px;top:479.2px;width:1250px;height:1px;background:#fafafa"></div>
<div class="abs" style="left:8.4px;top:465px;width:14.2px;height:11px;background:#fdfdfd;border:1px solid #e6e6e6;border-radius:2px"></div>
<div class="abs" style="left:8.8px;top:479.5px;width:13.8px;height:11px;background:#fdfdfd;border:1px solid #e6e6e6;border-radius:2px"></div>
<svg class="abs" style="left:8px;top:464px" width="16" height="28" viewBox="0 0 16 28"><path d="M2.9 8.8 L12 8.8 L7.45 3.9 Z" fill="#000"/><path d="M2.9 18.3 L12 18.3 L7.45 23.2 Z" fill="#000"/></svg>

<!-- camera image -->
<div class="abs" style="left:24px;top:479.5px;width:152px;height:188.5px;background:
radial-gradient(ellipse 42% 30% at 0% 0%, rgba(176,150,255,.95) 0%, rgba(150,115,245,.5) 45%, rgba(130,90,230,0) 100%),
radial-gradient(ellipse 60% 28% at 0% 100%, rgba(165,130,235,.8) 0%, rgba(140,100,220,0) 100%),
radial-gradient(ellipse 50% 14% at 75% 100%, rgba(140,80,190,.4) 0%, rgba(140,80,190,0) 100%),
radial-gradient(ellipse 72% 64% at 102% 28%, #6a1a52 0%, #6d1d58 28%, rgba(112,32,100,.6) 62%, rgba(112,40,120,0) 100%),
linear-gradient(100deg,#7a46d6 0%,#6f3abf 40%,#73309e 75%,#7a2e96 100%)"></div>
<div class="abs" style="left:100.5px;top:571px;width:5px;height:5px;border-radius:2px;background:#ffee00;box-shadow:0 0 0 .6px #a07820"></div>
<div class="abs" style="left:181.5px;top:499px;width:1.4px;height:150px;background:#8a8a8a"></div>
<div class="abs" style="left:35px;top:673.3px;width:125px;height:1.3px;background:#8a8a8a"></div>

<svg class="abs" style="left:0;top:0" width="1268" height="686" viewBox="0 0 1268 686">
<rect x="237.2" y="493.8" width="819.4" height="158.0" fill="#fff"/>
<line x1="237.2" x2="1056.6" y1="633.6" y2="633.6" stroke="#8a8a8a" stroke-width="0.8"/>
<line x1="237.2" x2="1056.6" y1="615.6" y2="615.6" stroke="#8a8a8a" stroke-width="0.8"/>
<line x1="237.2" x2="1056.6" y1="597.6" y2="597.6" stroke="#8a8a8a" stroke-width="0.8"/>
<line x1="237.2" x2="1056.6" y1="579.6" y2="579.6" stroke="#8a8a8a" stroke-width="0.8"/>
<line x1="237.2" x2="1056.6" y1="561.6" y2="561.6" stroke="#8a8a8a" stroke-width="0.8"/>
<line x1="237.2" x2="1056.6" y1="543.5" y2="543.5" stroke="#8a8a8a" stroke-width="0.8"/>
<line x1="237.2" x2="1056.6" y1="525.5" y2="525.5" stroke="#8a8a8a" stroke-width="0.8"/>
<line x1="237.2" x2="1056.6" y1="507.5" y2="507.5" stroke="#8a8a8a" stroke-width="0.8"/>
<line x1="346.3" x2="346.3" y1="493.8" y2="651.8" stroke="#8a8a8a" stroke-width="0.8"/>
<line x1="455.4" x2="455.4" y1="493.8" y2="651.8" stroke="#8a8a8a" stroke-width="0.8"/>
<line x1="564.5" x2="564.5" y1="493.8" y2="651.8" stroke="#8a8a8a" stroke-width="0.8"/>
<line x1="673.6" x2="673.6" y1="493.8" y2="651.8" stroke="#8a8a8a" stroke-width="0.8"/>
<line x1="782.7" x2="782.7" y1="493.8" y2="651.8" stroke="#8a8a8a" stroke-width="0.8"/>
<line x1="891.8" x2="891.8" y1="493.8" y2="651.8" stroke="#8a8a8a" stroke-width="0.8"/>
<line x1="1000.9" x2="1000.9" y1="493.8" y2="651.8" stroke="#8a8a8a" stroke-width="0.8"/>
<polyline fill="none" stroke="#1a1aff" stroke-width="1" points="237.2,507.5 237.7,508.4 238.3,510.8 238.8,514.7 239.4,519.7 239.9,525.7 240.5,532.2 241.0,539.1 241.6,545.8 242.1,552.2 242.7,557.9 243.2,562.8 243.7,566.5 244.3,569.1 244.8,570.4 245.4,570.4 245.9,569.4 246.5,567.4 247.0,564.7 247.6,561.2 248.1,557.2 248.7,552.9 249.2,548.4 249.7,544.0 250.3,539.8 250.8,536.0 251.4,532.6 251.9,530.0 252.5,528.0 253.0,526.8 253.6,526.4 254.1,526.9 254.7,528.2 255.2,530.3 255.7,533.2 256.3,536.5 256.8,540.4 257.4,544.4 257.9,548.6 258.5,552.8 259.0,556.8 259.6,560.4 260.1,563.6 260.7,566.3 261.2,568.4 261.7,569.8 262.3,570.5 262.8,570.5 263.4,569.9 263.9,568.7 264.5,567.1 265.0,564.9 265.6,562.3 266.1,559.4 266.7,556.1 267.2,552.7 267.7,549.0 268.3,545.3 268.8,541.6 269.4,537.9 269.9,534.3 270.5,530.9 271.0,527.7 271.6,524.8 272.1,522.2 272.7,519.9 273.2,518.1 273.7,516.6 274.3,515.6 274.8,514.9 275.4,514.7 275.9,515.0 276.5,515.7 277.0,516.8 277.6,518.4 278.1,520.4 278.7,522.7 279.2,525.4 279.7,528.3 280.3,531.5 280.8,534.9 281.4,538.4 281.9,542.0 282.5,545.8 283.0,549.5 283.6,553.2 284.1,556.9 284.7,560.5 285.2,563.9 285.7,567.2 286.3,570.3 286.8,573.1 287.4,575.7 287.9,578.1 288.5,580.1 289.0,581.9 289.6,583.3 290.1,584.4 290.7,585.2 291.2,585.7 291.8,585.9 292.3,585.8 292.8,585.5 293.4,585.0 293.9,584.3 294.5,583.4 295.0,582.4 295.6,581.2 296.1,579.9 296.7,578.5 297.2,577.0 297.8,575.4 298.3,573.8 298.8,572.1 299.4,570.4 299.9,568.6 300.5,566.9 301.0,565.2 301.6,563.5 302.1,561.9 302.7,560.4 303.2,559.0 303.8,557.6 304.3,556.3 304.8,555.2 305.4,554.2 305.9,553.3 306.5,552.5 307.0,551.9 307.6,551.4 308.1,551.0 308.7,550.8 309.2,550.7 309.8,550.8 310.3,551.0 310.8,551.4 311.4,551.9 311.9,552.5 312.5,553.3 313.0,554.2 313.6,555.2 314.1,556.3 314.7,557.5 315.2,558.8 315.8,560.1 316.3,561.6 316.8,563.1 317.4,564.7 317.9,566.3 318.5,568.0 319.0,569.7 319.6,571.4 320.1,573.1 320.7,574.9 321.2,576.6 321.8,578.4 322.3,580.1 322.8,581.8 323.4,583.5 323.9,585.2 324.5,586.8 325.0,588.3 325.6,589.8 326.1,591.3 326.7,592.6 327.2,594.0 327.8,595.2 328.3,596.4 328.8,597.5 329.4,598.5 329.9,599.4 330.5,600.3 331.0,601.0 331.6,601.7 332.1,602.3 332.7,602.8 333.2,603.2 333.8,603.5 334.3,603.7 334.8,603.8 335.4,603.9 335.9,603.8 336.5,603.7 337.0,603.5 337.6,603.3 338.1,603.0 338.7,602.6 339.2,602.1 339.8,601.6 340.3,601.1 340.8,600.4 341.4,599.8 341.9,599.1 342.5,598.3 343.0,597.5 343.6,596.7 344.1,595.9 344.7,595.0 345.2,594.1 345.8,593.2 346.3,592.3 346.8,591.3 347.4,590.4 347.9,589.4 348.5,588.5 349.0,587.6 349.6,586.7 350.1,585.8 350.7,584.9 351.2,584.0 351.8,583.1 352.3,582.3 352.8,581.5 353.4,580.8 353.9,580.0 354.5,579.4 355.0,578.7 355.6,578.1 356.1,577.5 356.7,577.0 357.2,576.5 357.8,576.1 358.3,575.7 358.8,575.3 359.4,575.0 359.9,574.7 360.5,574.5 361.0,574.4 361.6,574.2 362.1,574.2 362.7,574.2 363.2,574.2 363.8,574.3 364.3,574.4 364.8,574.6 365.4,574.8 365.9,575.0 366.5,575.3 367.0,575.7 367.6,576.1 368.1,576.5 368.7,577.0 369.2,577.5 369.8,578.1 370.3,578.7 370.8,579.3 371.4,580.0 371.9,580.7 372.5,581.4 373.0,582.1 373.6,582.9 374.1,583.7 374.7,584.6 375.2,585.4 375.8,586.3 376.3,587.2 376.8,588.1 377.4,589.0 377.9,590.0 378.5,590.9 379.0,591.9 379.6,592.9 380.1,593.9 380.7,594.9 381.2,595.9 381.8,596.9 382.3,597.9 382.8,599.0 383.4,600.0 383.9,601.0 384.5,602.0 385.0,603.0 385.6,604.1 386.1,605.1 386.7,606.1 387.2,607.1 387.8,608.1 388.3,609.0 388.8,610.0 389.4,611.0 389.9,611.9 390.5,612.8 391.0,613.8 391.6,614.7 392.1,615.6 392.7,616.4 393.2,617.3 393.8,618.1 394.3,618.9 394.8,619.7 395.4,620.5 395.9,621.3 396.5,622.0 397.0,622.7 397.6,623.4 398.1,624.1 398.7,624.7 399.2,625.4 399.8,626.0 400.3,626.6 400.9,627.1 403.0,629.1 405.2,630.7 407.4,631.8 409.6,632.6 411.8,633.0 413.9,633.0 416.1,632.6 418.3,631.9 420.5,630.9 422.7,629.6 424.9,628.1 427.0,626.3 429.2,624.4 431.4,622.3 433.6,620.0 435.8,617.7 437.9,615.4 440.1,613.0 442.3,610.7 444.5,608.4 446.7,606.1 448.9,604.0 451.0,601.9 453.2,600.0 455.4,598.2 457.6,596.5 459.8,595.0 461.9,593.7 464.1,592.6 466.3,591.6 468.5,590.8 470.7,590.2 472.9,589.8 475.0,589.5 477.2,589.5 479.4,589.5 481.6,589.7 483.8,590.1 485.9,590.6 488.1,591.1 490.3,591.8 492.5,592.6 494.7,593.5 496.9,594.5 499.0,595.6 501.2,596.7 503.4,597.9 505.6,599.2 507.8,600.5 509.9,601.8 512.1,603.2 514.3,604.6 516.5,606.0 518.7,607.5 520.9,608.9 523.0,610.4 525.2,611.8 527.4,613.3 529.6,614.7 531.8,616.2 534.0,617.5 536.1,618.9 538.3,620.3 540.5,621.6 542.7,622.8 544.9,624.1 547.0,625.3 549.2,626.4 551.4,627.5 553.6,628.6 555.8,629.6 558.0,630.6 560.1,631.5 562.3,632.3 564.5,633.1 566.7,633.9 568.9,634.6 571.0,635.2 573.2,635.8 575.4,636.4 577.6,636.9 579.8,637.3 582.0,637.7 584.1,638.0 586.3,638.3 588.5,638.5 590.7,638.7 592.9,638.9 595.0,638.9 597.2,639.0 599.4,639.0 601.6,638.9 603.8,638.9 606.0,638.7 608.1,638.6 610.3,638.4 612.5,638.2 614.7,637.9 616.9,637.6 619.0,637.3 621.2,636.9 623.4,636.5 625.6,636.1 627.8,635.6 630.0,635.2 632.1,634.7 634.3,634.2 636.5,633.6 638.7,633.1 640.9,632.5 643.1,631.9 645.2,631.3 647.4,630.7 649.6,630.1 651.8,629.5 654.0,628.8 656.1,628.2 658.3,627.5 660.5,626.8 662.7,626.1 664.9,625.5 667.1,624.8 669.2,624.1 671.4,623.4 673.6,622.7 675.8,622.0 678.0,621.3 680.1,620.6 682.3,619.9 684.5,619.2 686.7,618.5 688.9,617.9 691.1,617.2 693.2,616.5 695.4,615.8 697.6,615.2 699.8,614.5 702.0,613.9 704.1,613.2 706.3,612.6 708.5,612.0 710.7,611.4 712.9,610.7 715.1,610.1 717.2,609.6 719.4,609.0 721.6,608.4 723.8,607.9 726.0,607.3 728.1,606.8 730.3,606.3 732.5,605.7 734.7,605.2 736.9,604.8 739.1,604.3 741.2,603.8 743.4,603.4 745.6,602.9 747.8,602.5 750.0,602.1 752.2,601.7 754.3,601.3 756.5,600.9 758.7,600.5 760.9,600.2 763.1,599.8 765.2,599.5 767.4,599.2 769.6,598.9 771.8,598.6 774.0,598.3 776.2,598.0 778.3,597.8 780.5,597.5 782.7,597.3 784.9,597.1 787.1,596.9 789.2,596.7 791.4,596.5 793.6,596.3 795.8,596.1 798.0,596.0 800.2,595.8 802.3,595.7 804.5,595.6 806.7,595.5 808.9,595.4 811.1,595.3 813.2,595.2 815.4,595.1 817.6,595.1 819.8,595.0 822.0,595.0 824.2,594.9 826.3,594.9 828.5,594.9 830.7,594.9 832.9,594.9 835.1,594.9 837.2,594.9 839.4,594.9 841.6,594.9 843.8,595.0 846.0,595.0 848.2,595.1 850.3,595.1 852.5,595.2 854.7,595.3 856.9,595.3 859.1,595.4 861.3,595.5 863.4,595.6 865.6,595.7 867.8,595.8 870.0,595.9 872.2,596.0 874.3,596.1 876.5,596.3 878.7,596.4 880.9,596.5 883.1,596.6 885.3,596.8 887.4,596.9 889.6,597.1 891.8,597.2 894.0,597.4 896.2,597.6 898.3,597.7 900.5,597.9 902.7,598.1 904.9,598.2 907.1,598.4 909.3,598.6 911.4,598.8 913.6,599.0 915.8,599.2 918.0,599.4 920.2,599.5 922.3,599.7 924.5,599.9 926.7,600.2 928.9,600.4 931.1,600.6 933.3,600.8 935.4,601.0 937.6,601.2 939.8,601.4 942.0,601.6 944.2,601.8 946.3,602.1 948.5,602.3 950.7,602.5 952.9,602.7 955.1,603.0 957.3,603.2 959.4,603.4 961.6,603.6 963.8,603.9 966.0,604.1 968.2,604.3 970.4,604.6 972.5,604.8 974.7,605.0 976.9,605.3 979.1,605.5 981.3,605.7 983.4,606.0 985.6,606.2 987.8,606.5 990.0,606.7 992.2,606.9 994.4,607.2 996.5,607.4 998.7,607.6 1000.9,607.9 1003.1,608.1 1005.3,608.3 1007.4,608.6 1009.6,608.8 1011.8,609.1 1014.0,609.3 1016.2,609.5 1018.4,609.8 1020.5,610.0 1022.7,610.2 1024.9,610.5 1027.1,610.7 1029.3,610.9 1031.4,611.2 1033.6,611.4 1035.8,611.6 1038.0,611.9 1040.2,612.1 1042.4,612.3 1044.5,612.5 1046.7,612.8 1048.9,613.0 1051.1,613.2 1053.3,613.5 1055.5,613.7"/>
<polyline fill="none" stroke="#ff2020" stroke-width="1" points="291.8,586.2 292.3,586.1 292.8,585.8 293.4,585.3 293.9,584.6 294.5,583.7 295.0,582.7 295.6,581.5 296.1,580.2 296.7,578.8 297.2,577.3 297.8,575.7 298.3,574.1 298.8,572.4 299.4,570.7 299.9,568.9 300.5,567.2 301.0,565.5 301.6,563.8 302.1,562.2 302.7,560.7 303.2,559.3 303.8,557.9 304.3,556.6 304.8,555.5 305.4,554.5 305.9,553.6 306.5,552.8 307.0,552.2 307.6,551.7 308.1,551.3 308.7,551.1 309.2,551.0 309.8,551.1 310.3,551.3 310.8,551.7 311.4,552.2 311.9,552.8 312.5,553.6 313.0,554.5 313.6,555.5 314.1,556.6 314.7,557.8 315.2,559.1 315.8,560.4 316.3,561.9 316.8,563.4 317.4,565.0 317.9,566.6 318.5,568.3 319.0,570.0 319.6,571.7 320.1,573.4 320.7,575.2 321.2,576.9 321.8,578.7 322.3,580.4 322.8,582.1 323.4,583.8 323.9,585.5 324.5,587.1 325.0,588.6 325.6,590.1 326.1,591.6 326.7,592.9 327.2,594.3 327.8,595.5 328.3,596.7 328.8,597.8 329.4,598.8 329.9,599.7 330.5,600.6 331.0,601.3 331.6,602.0 332.1,602.6 332.7,603.1 333.2,603.5 333.8,603.8 334.3,604.0 334.8,604.1 335.4,604.2 335.9,604.1 336.5,604.0 337.0,603.8 337.6,603.6 338.1,603.3 338.7,602.9 339.2,602.4 339.8,601.9 340.3,601.4 340.8,600.7 341.4,600.1 341.9,599.4 342.5,598.6 343.0,597.8 343.6,597.0 344.1,596.2 344.7,595.3 345.2,594.4 345.8,593.5 346.3,592.6 346.8,591.6 347.4,590.7 347.9,589.7 348.5,588.8 349.0,587.9 349.6,587.0 350.1,586.1 350.7,585.2 351.2,584.3 351.8,583.4 352.3,582.6 352.8,581.8 353.4,581.1 353.9,580.3 354.5,579.7 355.0,579.0 355.6,578.4 356.1,577.8 356.7,577.3 357.2,576.8 357.8,576.4 358.3,576.0 358.8,575.6 359.4,575.3 359.9,575.0 360.5,574.8 361.0,574.7 361.6,574.5 362.1,574.5 362.7,574.5 363.2,574.5 363.8,574.6 364.3,574.7 364.8,574.9 365.4,575.1 365.9,575.3 366.5,575.6 367.0,576.0 367.6,576.4 368.1,576.8 368.7,577.3 369.2,577.8 369.8,578.4 370.3,579.0 370.8,579.6 371.4,580.3 371.9,581.0 372.5,581.7 373.0,582.4 373.6,583.2 374.1,584.0 374.7,584.9 375.2,585.7 375.8,586.6 376.3,587.5 376.8,588.4 377.4,589.3 377.9,590.3 378.5,591.2 379.0,592.2 379.6,593.2 380.1,594.2 380.7,595.2 381.2,596.2 381.8,597.2 382.3,598.2 382.8,599.3 383.4,600.3 383.9,601.3 384.5,602.3 385.0,603.3 385.6,604.4 386.1,605.4 386.7,606.4 387.2,607.4 387.8,608.4 388.3,609.3 388.8,610.3 389.4,611.3 389.9,612.2 390.5,613.1 391.0,614.1 391.6,615.0 392.1,615.9 392.7,616.7 393.2,617.6 393.8,618.4 394.3,619.2 394.8,620.0 395.4,620.8 395.9,621.6 396.5,622.3 397.0,623.0 397.6,623.7 398.1,624.4 398.7,625.0 399.2,625.7 399.8,626.3 400.3,626.9 400.9,627.4 403.0,629.4 405.2,631.0 407.4,632.1 409.6,632.9 411.8,633.3 413.9,633.3 416.1,632.9 418.3,632.2 420.5,631.2 422.7,629.9 424.9,628.4 427.0,626.6 429.2,624.7 431.4,622.6 433.6,620.3 435.8,618.0 437.9,615.7 440.1,613.3 442.3,611.0 444.5,608.7 446.7,606.4 448.9,604.3 451.0,602.2 453.2,600.3 455.4,598.5 457.6,596.8 459.8,595.3 461.9,594.0 464.1,592.9 466.3,591.9 468.5,591.1 470.7,590.5 472.9,590.1 475.0,589.8 477.2,589.8 479.4,589.8 481.6,590.0 483.8,590.4 485.9,590.9 488.1,591.4 490.3,592.1 492.5,592.9 494.7,593.8 496.9,594.8 499.0,595.9 501.2,597.0 503.4,598.2 505.6,599.5 507.8,600.8 509.9,602.1 512.1,603.5 514.3,604.9 516.5,606.3 518.7,607.8 520.9,609.2 523.0,610.7 525.2,612.1 527.4,613.6 529.6,615.0 531.8,616.5 534.0,617.8 536.1,619.2 538.3,620.6 540.5,621.9 542.7,623.1 544.9,624.4 547.0,625.6 549.2,626.7 551.4,627.8 553.6,628.9 555.8,629.9 558.0,630.9 560.1,631.8 562.3,632.6 564.5,633.4 566.7,634.2 568.9,634.9 571.0,635.5 573.2,636.1 575.4,636.7 577.6,637.2 579.8,637.6 582.0,638.0 584.1,638.3 586.3,638.6 588.5,638.8 590.7,639.0 592.9,639.2 595.0,639.2 597.2,639.3 599.4,639.3 601.6,639.2 603.8,639.2 606.0,639.0 608.1,638.9 610.3,638.7 612.5,638.5 614.7,638.2 616.9,637.9 619.0,637.6 621.2,637.2 623.4,636.8 625.6,636.4 627.8,635.9 630.0,635.5 632.1,635.0 634.3,634.5 636.5,633.9 638.7,633.4 640.9,632.8 643.1,632.2 645.2,631.6 647.4,631.0 649.6,630.4 651.8,629.8 654.0,629.1 656.1,628.5 658.3,627.8 660.5,627.1 662.7,626.4 664.9,625.8 667.1,625.1 669.2,624.4 671.4,623.7 673.6,623.0 675.8,622.3 678.0,621.6 680.1,620.9 682.3,620.2 684.5,619.5 686.7,618.8 688.9,618.2 691.1,617.5 693.2,616.8 695.4,616.1 697.6,615.5 699.8,614.8 702.0,614.2 704.1,613.5 706.3,612.9 708.5,612.3 710.7,611.7 712.9,611.0 715.1,610.4 717.2,609.9 719.4,609.3 721.6,608.7 723.8,608.2 726.0,607.6 728.1,607.1 730.3,606.6 732.5,606.1 734.7,605.6 736.9,605.2 739.1,604.7 741.2,604.3 743.4,603.8 745.6,603.4 747.8,603.0 750.0,602.6 752.2,602.2 754.3,601.9 756.5,601.5 758.7,601.2 760.9,600.8 763.1,600.5 765.2,600.2 767.4,599.9 769.6,599.6 771.8,599.3 774.0,599.1 776.2,598.8 778.3,598.6 780.5,598.4 782.7,598.1 784.9,597.9 787.1,597.7 789.2,597.6 791.4,597.4 793.6,597.2 795.8,597.1 798.0,596.9 800.2,596.8 802.3,596.7 804.5,596.6 806.7,596.5 808.9,596.4 811.1,596.3 813.2,596.2 815.4,596.2 817.6,596.1 819.8,596.1 822.0,596.1 824.2,596.0 826.3,596.0 828.5,596.0 830.7,596.0 832.9,596.0 835.1,596.0 837.2,596.0 839.4,596.1 841.6,596.1 843.8,596.2 846.0,596.2 848.2,596.3 850.3,596.3 852.5,596.4 854.7,596.5 856.9,596.5 859.1,596.6 861.3,596.7 863.4,596.8 865.6,596.9 867.8,597.0 870.0,597.1 872.2,597.2 874.3,597.3 876.5,597.4 878.7,597.6 880.9,597.7 883.1,597.8 885.3,598.0 887.4,598.1 889.6,598.2 891.8,598.4 894.0,598.5 896.2,598.7 898.3,598.9 900.5,599.0 902.7,599.2 904.9,599.3 907.1,599.5 909.3,599.7 911.4,599.9 913.6,600.0 915.8,600.2 918.0,600.4 920.2,600.6 922.3,600.8 924.5,600.9 926.7,601.1 928.9,601.3 931.1,601.5 933.3,601.7 935.4,601.9 937.6,602.1 939.8,602.3 942.0,602.5 944.2,602.7 946.3,602.9 948.5,603.1 950.7,603.3 952.9,603.5 955.1,603.7 957.3,603.9 959.4,604.1 961.6,604.3 963.8,604.5 966.0,604.8 968.2,605.0 970.4,605.2 972.5,605.4 974.7,605.6 976.9,605.8 979.1,606.0 981.3,606.2 983.4,606.5 985.6,606.7 987.8,606.9 990.0,607.1 992.2,607.3 994.4,607.5 996.5,607.7 998.7,608.0 1000.9,608.2"/>
<rect x="237.2" y="493.8" width="819.4" height="158.0" fill="none" stroke="#000" stroke-width="1.6"/>
<g font-family="Liberation Sans, sans-serif" font-size="8.3" fill="#111">
<line x1="233.7" x2="237.2" y1="651.6" y2="651.6" stroke="#000" stroke-width="0.8"/>
<text x="233" y="654.6" text-anchor="end">0</text>
<line x1="233.7" x2="237.2" y1="633.6" y2="633.6" stroke="#000" stroke-width="0.8"/>
<text x="233" y="636.6" text-anchor="end">10</text>
<line x1="233.7" x2="237.2" y1="615.6" y2="615.6" stroke="#000" stroke-width="0.8"/>
<text x="233" y="618.6" text-anchor="end">20</text>
<line x1="233.7" x2="237.2" y1="597.6" y2="597.6" stroke="#000" stroke-width="0.8"/>
<text x="233" y="600.6" text-anchor="end">30</text>
<line x1="233.7" x2="237.2" y1="579.6" y2="579.6" stroke="#000" stroke-width="0.8"/>
<text x="233" y="582.6" text-anchor="end">40</text>
<line x1="233.7" x2="237.2" y1="561.6" y2="561.6" stroke="#000" stroke-width="0.8"/>
<text x="233" y="564.6" text-anchor="end">50</text>
<line x1="233.7" x2="237.2" y1="543.5" y2="543.5" stroke="#000" stroke-width="0.8"/>
<text x="233" y="546.5" text-anchor="end">60</text>
<line x1="233.7" x2="237.2" y1="525.5" y2="525.5" stroke="#000" stroke-width="0.8"/>
<text x="233" y="528.5" text-anchor="end">70</text>
<line x1="233.7" x2="237.2" y1="507.5" y2="507.5" stroke="#000" stroke-width="0.8"/>
<text x="233" y="510.5" text-anchor="end">80</text>
<line x1="237.2" x2="237.2" y1="651.8" y2="654.8" stroke="#000" stroke-width="0.8"/>
<text x="237.2" y="664.5" text-anchor="middle">200</text>
<line x1="346.3" x2="346.3" y1="651.8" y2="654.8" stroke="#000" stroke-width="0.8"/>
<text x="346.3" y="664.5" text-anchor="middle">400</text>
<line x1="455.4" x2="455.4" y1="651.8" y2="654.8" stroke="#000" stroke-width="0.8"/>
<text x="455.4" y="664.5" text-anchor="middle">600</text>
<line x1="564.5" x2="564.5" y1="651.8" y2="654.8" stroke="#000" stroke-width="0.8"/>
<text x="564.5" y="664.5" text-anchor="middle">800</text>
<line x1="673.6" x2="673.6" y1="651.8" y2="654.8" stroke="#000" stroke-width="0.8"/>
<text x="673.6" y="664.5" text-anchor="middle">1000</text>
<line x1="782.7" x2="782.7" y1="651.8" y2="654.8" stroke="#000" stroke-width="0.8"/>
<text x="782.7" y="664.5" text-anchor="middle">1200</text>
<line x1="891.8" x2="891.8" y1="651.8" y2="654.8" stroke="#000" stroke-width="0.8"/>
<text x="891.8" y="664.5" text-anchor="middle">1400</text>
<line x1="1000.9" x2="1000.9" y1="651.8" y2="654.8" stroke="#000" stroke-width="0.8"/>
<text x="1000.9" y="664.5" text-anchor="middle">1600</text>
</g>
<g font-family="Liberation Sans, Noto Sans CJK SC, sans-serif" font-size="8.6" fill="#111">
<text x="645.6" y="676" text-anchor="middle">波长 (nm)</text>
<text transform="translate(212.5,572.6) rotate(-90)" text-anchor="middle">反射率 (%)</text>
</g>
<rect x="289.8" y="494.8" width="76.2" height="12.6" fill="#fff" stroke="#888" stroke-width="0.8"/>
<rect x="289.8" y="508" width="124.6" height="12.6" fill="#fff" stroke="#888" stroke-width="0.8"/>
<g font-family="Liberation Sans, sans-serif" font-size="8.3">
<text x="292.5" y="504.2" fill="#1a1aff">Unknown-(0.0, 0.0)</text>
<text x="292.5" y="517.5" fill="#ff1010">Unknown-(0.0, 0.0) (Calculated)</text>
</g>
</svg>

<!-- bottom right -->
<div class="t cj" style="left:1082px;top:484.5px">量测座标。位置:</div>
<div class="t" style="left:1081.5px;top:501.5px;font-size:8.6px">X</div>
<div class="abs" style="left:1094px;top:499px;width:36px;height:13.2px;background:#f2f2f2;border:1px solid #bcbcbc;padding:1.5px 0 0 2px">0.000</div>
<div class="t" style="left:1141px;top:501.5px;font-size:8.6px">Y</div>
<div class="abs" style="left:1153.3px;top:499px;width:36px;height:13.2px;background:#f2f2f2;border:1px solid #bcbcbc;padding:1.5px 0 0 2px">0.000</div>
<div class="t cj" style="left:1082px;top:517px">结果:</div>
<div class="abs" style="left:1077.5px;top:532px;width:156.5px;height:103px;background:#f0f0f0;border:1px solid #f6f6f6;border-left:1.3px solid #6e6e6e;border-top:1.3px solid #8a8a8a"></div>
<div class="t" style="left:1079.5px;top:534.6px">SiO2 = <b>449.85 nm</b></div>
<div class="t" style="left:1079.5px;top:545.3px">Goodness of fit = 0.998751</div>
<div class="abs" style="left:1246px;top:677px;width:14.2px;height:1.2px;background:#8e8e8e"></div>
</body></html>
